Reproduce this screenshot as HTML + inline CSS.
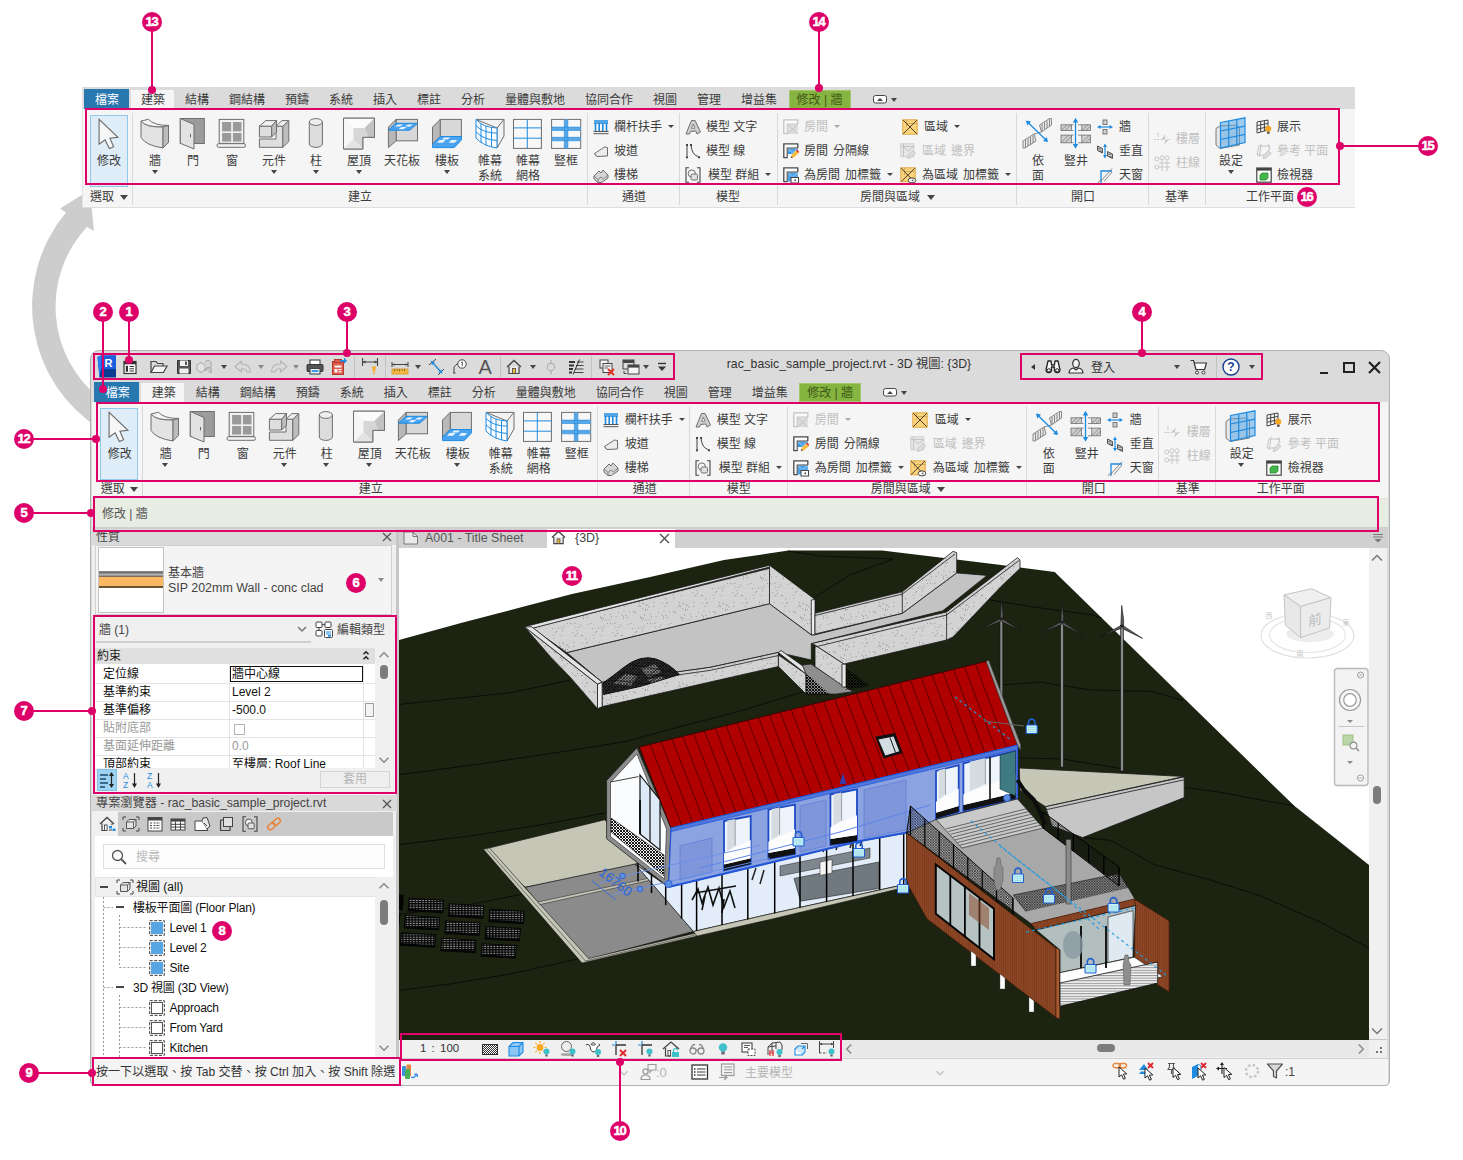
<!DOCTYPE html><html lang="zh-Hant"><head><meta charset="utf-8"><title>Revit UI</title><style>
*{box-sizing:border-box;margin:0;padding:0}
html,body{width:1463px;height:1160px;overflow:hidden;background:#fff}
body{position:relative;font-family:"Liberation Sans","Noto Sans CJK TC",sans-serif;font-size:12px;color:#3c3c3c;line-height:14px}
.a{position:absolute}
.t{position:absolute;white-space:nowrap;line-height:14px;height:14px}
.c{position:absolute;white-space:nowrap;line-height:14px;height:14px;transform:translateX(-50%);text-align:center}
.dis{color:#c0c0c0}
i{display:inline-block;width:5px}
.pb{position:absolute;border:2px solid #dc0068;pointer-events:none}
.num{position:absolute;width:20px;height:20px;border-radius:50%;background:#dc0068;color:#fff;font-weight:bold;font-size:13px;line-height:20px;text-align:center;font-family:"Liberation Sans",sans-serif;letter-spacing:-1.2px;text-indent:-1.2px;-webkit-text-stroke:.5px #fff}
.ln{position:absolute;background:#dc0068}
.dot{position:absolute;width:8px;height:8px;border-radius:50%;background:#dc0068}
.sep{position:absolute;width:1px;background:#d9d9d9}
.arr{position:absolute;width:0;height:0;border-left:3.5px solid transparent;border-right:3.5px solid transparent;border-top:4px solid #444}
svg{position:absolute;overflow:visible}
</style></head><body>
<svg style="left:0;top:0" width="1463" height="1160" viewBox="0 0 1463 1160"><path d="M60 208.5 L90 190 L94 231 L86.8 227 A117.3 117.3 0 0 0 100 398.6 L100 429 A145.5 145.5 0 0 1 66 212.6 Z" fill="#cdcdcd"/></svg>
<div class="a" style="left:82px;top:87px;width:1273px;height:121px;background:#e4e4e4"></div>
<div class="a" style="left:83px;top:87px;width:1272px;height:22px;background:#dbdbdb"></div>
<div class="a" style="left:83px;top:109px;width:1272px;height:98px;background:#f5f5f5"></div>
<div class="a" style="left:84px;top:89px;width:45px;height:20px;background:#2878b0"></div>
<div class="c " style="left:107px;top:93px;color:#fff">檔案</div>
<div class="a" style="left:131px;top:90px;width:43px;height:19px;background:#f5f5f5"></div>
<div class="c " style="left:153px;top:93px;">建築</div>
<div class="c " style="left:197px;top:93px;">結構</div>
<div class="c " style="left:247px;top:93px;">鋼結構</div>
<div class="c " style="left:297px;top:93px;">預鑄</div>
<div class="c " style="left:341px;top:93px;">系統</div>
<div class="c " style="left:385px;top:93px;">插入</div>
<div class="c " style="left:429px;top:93px;">標註</div>
<div class="c " style="left:473px;top:93px;">分析</div>
<div class="c " style="left:535px;top:93px;">量體與敷地</div>
<div class="c " style="left:609px;top:93px;">協同合作</div>
<div class="c " style="left:665px;top:93px;">視圖</div>
<div class="c " style="left:709px;top:93px;">管理</div>
<div class="c " style="left:759px;top:93px;">增益集</div>
<div class="a" style="left:788.5px;top:90px;width:62px;height:19px;background:#86b441;border:1px solid #a3c76a"></div>
<div class="c " style="left:819.5px;top:93px;color:#3f5a17">修改 | 牆</div>
<svg style="left:873px;top:95px" width="16" height="9" viewBox="0 0 16 9"><rect x=".5" y=".5" width="13" height="7.5" rx="2" fill="#fff" stroke="#444" stroke-width="1"/><path d="M4 6 L7 3 L10 6 Z" fill="#444"/></svg>
<div class="arr" style="left:890.5px;top:98px;border-top-color:#444"></div>
<div class="a" style="left:90px;top:115px;width:38px;height:72px;background:#deedf7;border:1px solid #8fc9ec"></div>
<svg style="left:93px;top:117px" width="32" height="32" viewBox="0 0 32 32"><path d="M6.1 2.4 L6.1 27.2 L12.1 22.9 L16.4 31.5 L20.6 29.7 L16.9 21.2 L24.9 20.3 Z" fill="#f7f7f7" stroke="#6a6a6a" stroke-width="1.1" stroke-linejoin="miter"/></svg>
<div class="c" style="left:109px;top:154px;height:auto;line-height:15px">修改</div>
<svg style="left:139px;top:117px" width="32" height="32" viewBox="0 0 32 32"><path d="M2 4 Q7 10.5 24 9.8 L24 31 Q7 28.5 2 20.5 Z" fill="#e3e3e3" stroke="#6e6e6e" stroke-width="1"/><path d="M24 9.8 L29.5 8.4 L29.5 25.5 L24 31 Z" fill="#bcbcbc" stroke="#6e6e6e" stroke-width="1"/><path d="M2 4 L9.5 2.3 Q15 8.6 29.5 8.4 L24 9.8 Q7 10.5 2 4 Z" fill="#f4f4f4" stroke="#6e6e6e" stroke-width="1"/></svg>
<div class="c" style="left:155px;top:154px;height:auto;line-height:15px">牆</div>
<div class="arr" style="left:151.5px;top:170px;border-top-color:#444"></div>
<svg style="left:177px;top:117px" width="32" height="32" viewBox="0 0 32 32"><rect x="3.3" y="1.5" width="24" height="25" fill="#9c9c9c" stroke="#6e6e6e" stroke-width="1"/><path d="M3.3 1.5 L17 7.5 L17 32 L3.3 26.3 Z" fill="#e2e2e2" stroke="#6e6e6e" stroke-width="1"/><rect x="13" y="17" width="1" height="3.4" fill="#666"/></svg>
<div class="c" style="left:193px;top:154px;height:auto;line-height:15px">門</div>
<svg style="left:216px;top:117px" width="32" height="32" viewBox="0 0 32 32"><rect x="3.2" y="2.4" width="24.6" height="24" fill="#f2f2f2" stroke="#6e6e6e" stroke-width="1"/><rect x="6.1" y="5" width="9.1" height="9.4" fill="#9a9a9a"/><rect x="16.9" y="5" width="8.6" height="9.4" fill="#9a9a9a"/><rect x="6.1" y="16" width="9.1" height="8.6" fill="#9a9a9a"/><rect x="16.9" y="16" width="8.6" height="8.6" fill="#9a9a9a"/><rect x="1" y="26.7" width="28.5" height="3.6" rx="1.6" fill="#f2f2f2" stroke="#6e6e6e" stroke-width="1"/></svg>
<div class="c" style="left:232px;top:154px;height:auto;line-height:15px">窗</div>
<svg style="left:258px;top:117px" width="32" height="32" viewBox="0 0 32 32"><path d="M1.4 22 L18 22 L18 9.2 L24.8 9.2 L24.8 30.3 L1.4 30.3 Z" fill="#dedede" stroke="#6e6e6e" stroke-width="1"/><path d="M24.8 9.2 L30.8 3.6 L30.8 24.6 L24.8 30.3 Z" fill="#bdbdbd" stroke="#6e6e6e" stroke-width="1"/><path d="M18 9.2 L24 3.6 L30.8 3.6 L24.8 9.2 Z" fill="#f0f0f0" stroke="#6e6e6e" stroke-width="1"/><path d="M1.4 9.2 L13.7 9.2 L13.7 20 L1.4 20 Z" fill="#dedede" stroke="#6e6e6e" stroke-width="1"/><path d="M1.4 9.2 L7.7 3.6 L18.5 3.6 L13.7 9.2 Z" fill="#f0f0f0" stroke="#6e6e6e" stroke-width="1"/><path d="M13.7 9.2 L18.5 3.6 L18.5 15 L13.7 20 Z" fill="#bdbdbd" stroke="#6e6e6e" stroke-width="1"/></svg>
<div class="c" style="left:274px;top:154px;height:auto;line-height:15px">元件</div>
<div class="arr" style="left:270.5px;top:170px;border-top-color:#444"></div>
<svg style="left:300px;top:117px" width="32" height="32" viewBox="0 0 32 32"><path d="M9.3 5 L9.3 27 A6.55 3.4 0 0 0 22.4 27 L22.4 5 Z" fill="#dcdcdc" stroke="#6e6e6e" stroke-width="1"/><ellipse cx="15.85" cy="5" rx="6.55" ry="3.4" fill="#eeeeee" stroke="#6e6e6e" stroke-width="1"/></svg>
<div class="c" style="left:316px;top:154px;height:auto;line-height:15px">柱</div>
<div class="arr" style="left:312.5px;top:170px;border-top-color:#444"></div>
<svg style="left:343px;top:117px" width="32" height="32" viewBox="0 0 32 32"><path d="M0.5 1.2 L31.5 1.2 L31.5 20.3 L19.8 20.3 L19.8 32 L0.5 32 Z" fill="#f6f6f6" stroke="#6e6e6e" stroke-width="1"/><path d="M0.5 1.2 L10.5 11 L21.5 11 L31.5 1.2 Z" fill="#fbfbfb"/><path d="M31.5 1.2 L21.5 11 L25 20.3 L31.5 20.3 Z" fill="#c2c2c2"/><path d="M10.5 11 L21.5 11 L25 20.3 L19.8 20.3 L19.8 32 L10.5 22 Z" fill="#d6d6d6"/><path d="M0.5 32 L10.5 22 L19.8 32 Z" fill="#e4e4e4"/><path d="M0.5 1.2 L31.5 1.2 L31.5 20.3 L19.8 20.3 L19.8 32 L0.5 32 Z" fill="none" stroke="#6e6e6e" stroke-width="1"/></svg>
<div class="c" style="left:359px;top:154px;height:auto;line-height:15px">屋頂</div>
<div class="arr" style="left:355.5px;top:170px;border-top-color:#444"></div>
<svg style="left:386px;top:117px" width="32" height="32" viewBox="0 0 32 32"><rect x="10.1" y="2.4" width="21.4" height="21.4" fill="#d8d8d8" stroke="#6e6e6e" stroke-width="1"/><path d="M2.4 10.1 L10.1 2.4 L10.1 23.8 L2.4 30.6 Z" fill="#b8b8b8" stroke="#6e6e6e" stroke-width="1"/><path d="M2.4 13.2 L10.1 6.3 L31.5 6.3 L23.8 13.2 Z" fill="#4aa3f0" stroke="#1e8be0" stroke-width="1"/><path d="M9 9.6 L12 7.4 L17 7.4 L14 9.6 Z M19 9.6 L22 7.4 L27 7.4 L24 9.6 Z M12.5 12.2 L15.3 10 L20.3 10 L17.5 12.2 Z" fill="#e8f3fd"/></svg>
<div class="c" style="left:402px;top:154px;height:auto;line-height:15px">天花板</div>
<svg style="left:431px;top:117px" width="32" height="32" viewBox="0 0 32 32"><rect x="9.2" y="2.4" width="21.2" height="17.1" fill="#d8d8d8" stroke="#6e6e6e" stroke-width="1"/><path d="M1.5 10.1 L9.2 2.4 L9.2 19.5 L1.5 27.2 Z" fill="#b8b8b8" stroke="#6e6e6e" stroke-width="1"/><path d="M1.5 27.2 L9.2 19.5 L30.4 19.5 L30.4 22.9 L23.2 30.6 L1.5 30.6 Z" fill="#4aa3f0" stroke="#1e8be0" stroke-width="1"/><path d="M6 25.8 L8.6 23 L14.6 23 L12 25.8 Z M17.6 25.8 L20.2 23 L26.2 23 L23.6 25.8 Z M11 22.4 L13 20.4 L19 20.4 L17 22.4 Z" fill="#e8f3fd"/></svg>
<div class="c" style="left:447px;top:154px;height:auto;line-height:15px">樓板</div>
<div class="arr" style="left:443.5px;top:170px;border-top-color:#444"></div>
<svg style="left:474px;top:117px" width="32" height="32" viewBox="0 0 32 32"><path d="M2 2.4 L30 2.4 L30 19 L23 31 L23 11 Z" fill="#f2f2f2" stroke="#6e6e6e" stroke-width="1"/><path d="M2 2.4 Q9 10.5 23 11 L23 31 Q9 29 2 21 Z" fill="#fafcff" stroke="#1e8be0" stroke-width="1"/><path d="M7 7 L7 25.6 M12 9.2 L12 28.3 M17.5 10.5 L17.5 30 M2 8.6 Q9 16 23 16.2 M2 14.8 Q9 22.5 23 23.5" fill="none" stroke="#1e8be0" stroke-width="1"/><path d="M23 11 L30 2.4" stroke="#6e6e6e" stroke-width="1"/></svg>
<div class="c" style="left:490px;top:154px;height:auto;line-height:15px">帷幕<br>系統</div>
<svg style="left:512px;top:117px" width="32" height="32" viewBox="0 0 32 32"><rect x="1.5" y="2.4" width="27.9" height="29" fill="#f8f8f8" stroke="#6e6e6e" stroke-width="1"/><path d="M15.3 2.4 L15.3 31.4 M1.5 10.9 L29.4 10.9 M1.5 21.2 L29.4 21.2" stroke="#1e8be0" stroke-width="1"/></svg>
<div class="c" style="left:528px;top:154px;height:auto;line-height:15px">帷幕<br>網格</div>
<svg style="left:550px;top:117px" width="32" height="32" viewBox="0 0 32 32"><rect x="1.6" y="2.4" width="29.1" height="29" fill="#f8f8f8" stroke="#6e6e6e" stroke-width="1"/><path d="M1.6 11.8 L30.7 11.8 M1.6 22 L30.7 22" stroke="#5aa7e6" stroke-width="3.4"/><path d="M16.1 2.4 L16.1 31.4" stroke="#5aa7e6" stroke-width="3.6"/><path d="M1.6 10.1 L30.7 10.1 M1.6 13.5 L30.7 13.5 M1.6 20.3 L30.7 20.3 M1.6 23.8 L30.7 23.8 M14.3 2.4 L14.3 31.4 M17.9 2.4 L17.9 31.4" stroke="#1e8be0" stroke-width=".6"/></svg>
<div class="c" style="left:566px;top:154px;height:auto;line-height:15px">豎框</div>
<svg style="left:1022px;top:117px" width="32" height="32" viewBox="0 0 32 32"><path d="M17.5 8 L27.5 1.5 L29.5 1.5 L29.5 8 L19.5 15 Z" fill="#e8e8e8" stroke="#6e6e6e" stroke-width=".8"/><path d="M1 24 L12 17 L14 24 L3 31 L1 31 Z" fill="#e8e8e8" stroke="#6e6e6e" stroke-width=".8"/><path d="M20 7 L20 14 M22.5 5.5 L22.5 12.5 M25 4 L25 11 M27.5 2.3 L27.5 9.2 M3.5 23 L3.5 30.5 M6 21.5 L6 29 M8.5 20 L8.5 27.5 M11 18.4 L11 26" stroke="#6e6e6e" stroke-width=".8"/><path d="M19.5 15 L12 17" stroke="#6e6e6e" stroke-width=".8"/><path d="M5 4.5 L25 24" stroke="#1e8be0" stroke-width="1.3"/><path d="M4 3.5 L9 4.6 L5.2 8.4 Z M26 25 L21 23.9 L24.8 20.1 Z" fill="#1e8be0"/></svg>
<div class="c" style="left:1038px;top:154px;height:auto;line-height:15px">依<br>面</div>
<svg style="left:1060px;top:117px" width="32" height="32" viewBox="0 0 32 32"><rect x="1" y="7.8" width="10.5" height="5.7" fill="#cfcfcf" stroke="#6e6e6e" stroke-width=".8"/><rect x="1" y="18.1" width="10.5" height="7.7" fill="#cfcfcf" stroke="#6e6e6e" stroke-width=".8"/><rect x="21.8" y="7.8" width="8.700" height="5.7" fill="#cfcfcf" stroke="#6e6e6e" stroke-width=".8"/><rect x="21.8" y="18.1" width="8.700" height="7.7" fill="#cfcfcf" stroke="#6e6e6e" stroke-width=".8"/><path d="M1 13.5 L7 7.8 M5 13.5 L11 7.8 M1 25.8 L8.500 18.1 M5 25.8 L11.500 19 M21.8 13.5 L27.8 7.8 M25.8 13.5 L30.500 9 M21.8 25.8 L29.500 18.1 M25.8 25.8 L30.500 21" stroke="#6e6e6e" stroke-width=".7"/><path d="M11.5 7.8 L13.5 7.8 M11.5 13.5 L13.5 13.5 M11.5 18.1 L13.5 18.1 M11.5 25.8 L13.5 25.8 M18 7.8 L21.8 7.8 M18 13.5 L21.8 13.5 M18 18.1 L21.8 18.1 M18 25.8 L21.8 25.8" stroke="#6e6e6e" stroke-width=".8"/><path d="M15.5 3 L15.5 29.500" stroke="#1e8be0" stroke-width="1.3"/><path d="M15.5 0.8 L18.200 5.500 L12.800 5.500 Z M15.5 31.700 L18.200 27 L12.800 27 Z" fill="#1e8be0"/></svg>
<div class="c" style="left:1076px;top:154px;height:auto;line-height:15px">豎井</div>
<svg style="left:1215px;top:117px" width="32" height="32" viewBox="0 0 32 32"><path d="M1 11.5 L5 9 L20.5 8 L24.5 10.5 L24.5 28 L5 31.5 L1 28 Z" fill="#e6e6e6" stroke="#6e6e6e" stroke-width=".9"/><path d="M5.5 5.5 L30 0.8 L30 25.5 L5.5 31 Z" fill="#5aa7e6" fill-opacity=".55" stroke="#1e8be0" stroke-width="1.2"/><path d="M13.7 4 L13.7 29.2 M21.8 2.4 L21.8 27.4 M5.5 14 L30 9.1 M5.5 22.5 L30 17.3" stroke="#1e8be0" stroke-width="1.2"/></svg>
<div class="c" style="left:1231px;top:154px;height:auto;line-height:15px">設定</div>
<div class="arr" style="left:1227.5px;top:170px;border-top-color:#444"></div>
<div class="sep" style="left:587px;top:113px;height:92px"></div>
<div class="sep" style="left:679px;top:113px;height:92px"></div>
<div class="sep" style="left:777px;top:113px;height:92px"></div>
<div class="sep" style="left:1016px;top:113px;height:92px"></div>
<div class="sep" style="left:1148px;top:113px;height:92px"></div>
<div class="sep" style="left:1205px;top:113px;height:92px"></div>
<div class="sep" style="left:132px;top:113px;height:92px"></div>
<svg style="left:593px;top:118.5px" width="16" height="16" viewBox="0 0 16 16"><path d="M1 2 L15 2 M1 4 L15 4" stroke="#1e8be0" stroke-width="1.6"/><path d="M2.5 4 L2.5 12 M6.2 4 L6.2 12 M9.8 4 L9.8 12 M13.5 4 L13.5 12" stroke="#1e8be0" stroke-width="1.6"/><path d="M0.5 12.5 L15.5 12.5 M0.5 14.7 L15.5 14.7" stroke="#555" stroke-width="1"/></svg>
<div class="t" style="left:614px;top:120px">欄杆扶手<span style="display:inline-block;vertical-align:middle;margin-left:6px;margin-top:-2px;border-left:3px solid transparent;border-right:3px solid transparent;border-top:3px solid #444"></span></div>
<svg style="left:593px;top:142.5px" width="16" height="16" viewBox="0 0 16 16"><path d="M1.5 10.5 L11.5 4 L14.5 4.5 L14.5 13 L4 13.5 Z" fill="#ececec" stroke="#6e6e6e" stroke-width="1"/><path d="M4 13.5 L14.5 4.5" stroke="#6e6e6e" stroke-width="0"/><path d="M1.5 10.5 L4 13.5" stroke="#6e6e6e" stroke-width="1"/></svg>
<div class="t" style="left:614px;top:144px">坡道</div>
<svg style="left:593px;top:166.5px" width="16" height="16" viewBox="0 0 16 16"><path d="M1 9 L6 4 L8 6 L10 3 L15 8 L15 11 L8.5 15.5 L5 15.5 L1 12 Z" fill="#d5d5d5" stroke="#6e6e6e" stroke-width="1"/><path d="M1 9 L5 12.5 L8 10 L10.5 12 L15 8 M5 12.5 L5 15.5" fill="none" stroke="#6e6e6e" stroke-width=".8"/></svg>
<div class="t" style="left:614px;top:168px">樓梯</div>
<svg style="left:685px;top:118.5px" width="16" height="16" viewBox="0 0 16 16"><path d="M1 15 L6.5 1.5 L10 1.5 L15.5 13 L12 15 L10.8 12 L5.6 12.4 L4.5 15 Z" fill="#cfcfcf" stroke="#6e6e6e" stroke-width="1" stroke-linejoin="round"/><path d="M6.6 9.4 L8.3 5 L10 9.2 Z" fill="#f5f5f5" stroke="#6e6e6e" stroke-width=".8"/></svg>
<div class="t" style="left:706px;top:120px">模型 文字</div>
<svg style="left:685px;top:142.5px" width="16" height="16" viewBox="0 0 16 16"><path d="M2 3 L2 13.5" stroke="#444" stroke-width="1"/><path d="M6 2 Q7 12 13 13.5" fill="none" stroke="#444" stroke-width="1"/><rect x="1" y="1" width="2" height="2" fill="#444"/><rect x="1" y="13.3" width="2" height="2" fill="#444"/><rect x="5" y="1" width="2" height="2" fill="#444"/><rect x="13" y="13.3" width="2" height="2" fill="#444"/></svg>
<div class="t" style="left:706px;top:144px">模型 線</div>
<svg style="left:685px;top:166.5px" width="16" height="16" viewBox="0 0 16 16"><path d="M4 .8 L1 .8 L1 15.2 L4 15.2 M12 .8 L15 .8 L15 15.2 L12 15.2" fill="none" stroke="#444" stroke-width="1.1"/><circle cx="6.8" cy="6.5" r="3.6" fill="#f5f5f5" stroke="#6e6e6e" stroke-width="1"/><rect x="6" y="7" width="6.5" height="6" rx="1.4" fill="#e0e0e0" stroke="#6e6e6e" stroke-width="1"/></svg>
<div class="t" style="left:708px;top:168px">模型 群組<span style="display:inline-block;vertical-align:middle;margin-left:6px;margin-top:-2px;border-left:3px solid transparent;border-right:3px solid transparent;border-top:3px solid #444"></span></div>
<svg style="left:783px;top:118.5px" width="16" height="16" viewBox="0 0 16 16"><rect x="1.4" y="1.4" width="13" height="13" fill="#fafafa"/><rect x="4.8" y="5.5" width="10" height="9.500" fill="#dcdcdc"/><path d="M4.8 5.5 L14.8 15 M14.8 5.5 L4.8 15" stroke="#c6c6c6" stroke-width="1"/><path d="M.8 15 L.8 .8 L14.8 .8 L14.8 5" fill="none" stroke="#c4c4c4" stroke-width="1.3"/><path d="M.8 14.600 L4.200 14.600 L4.200 5 L14.8 5" fill="none" stroke="#c4c4c4" stroke-width="1.1"/></svg>
<div class="t dis" style="left:804px;top:120px">房間<span style="display:inline-block;vertical-align:middle;margin-left:6px;margin-top:-2px;border-left:3px solid transparent;border-right:3px solid transparent;border-top:3px solid #aaa"></span></div>
<svg style="left:783px;top:142.5px" width="16" height="16" viewBox="0 0 16 16"><rect x="1.4" y="1.4" width="13" height="13" fill="#fafafa"/><path d="M4.8 5.5 L14.8 5.5 L14.8 8 L9.5 11 L4.800 11 Z" fill="#4da3e8"/><path d="M4.8 5.5 L9.500 10 L14.8 5.5" fill="none" stroke="#9ccdf3" stroke-width=".9"/><path d="M5.200 9.800 L8 9.800" stroke="#1e8be0" stroke-width="1.2"/><path d="M.8 15 L.8 .8 L14.8 .8 L14.8 5" fill="none" stroke="#4a4a4a" stroke-width="1.3"/><path d="M.8 14.600 L4.200 14.600 L4.200 5 L14.8 5" fill="none" stroke="#4a4a4a" stroke-width="1.1"/><path d="M7.800 15 L8.800 11.800 L13 7.600 L15.600 10.200 L11.300 14.300 Z" fill="#f7bd3e"/><path d="M13 7.600 L14.200 6.400 L16 8.400 L15.600 10.200 Z" fill="#ee2f2f"/><path d="M7.800 15 L8.400 13.100 L9.800 14.400 Z" fill="#444"/></svg>
<div class="t" style="left:804px;top:144px">房間<i></i>分隔線</div>
<svg style="left:783px;top:166.5px" width="16" height="16" viewBox="0 0 16 16"><rect x="1.4" y="1.4" width="13" height="13" fill="#fafafa"/><rect x="4.8" y="5.5" width="10" height="9" fill="#4da3e8"/><path d="M4.8 5.5 L9.500 10 L14.8 5.5" fill="none" stroke="#9ccdf3" stroke-width=".9"/><path d="M.8 15 L.8 .8 L14.8 .8 L14.8 5" fill="none" stroke="#4a4a4a" stroke-width="1.3"/><path d="M.8 14.600 L4.200 14.600 L4.200 5 L14.8 5" fill="none" stroke="#4a4a4a" stroke-width="1.1"/><rect x="8" y="10.500" width="7.500" height="5.500" fill="#fff" stroke="#444" stroke-width="1"/><path d="M12.800 12 L10.800 13.300 L12.800 14.600 Z" fill="#444"/></svg>
<div class="t" style="left:804px;top:168px">為房間<i></i>加標籤<span style="display:inline-block;vertical-align:middle;margin-left:6px;margin-top:-2px;border-left:3px solid transparent;border-right:3px solid transparent;border-top:3px solid #444"></span></div>
<svg style="left:902px;top:118.5px" width="16" height="16" viewBox="0 0 16 16"><rect x=".8" y=".8" width="14.4" height="14.4" fill="#fbd37c" stroke="#e0aa45" stroke-width="1"/><path d="M4.500 .8 L4.500 8 M4.500 4.500 L15.200 4.500" stroke="#c9a050" stroke-width=".8"/><path d="M1.200 1.200 L14.800 14.800 M14.800 1.200 L1.200 14.800" stroke="#4a4030" stroke-width="1"/></svg>
<div class="t" style="left:924px;top:120px">區域<span style="display:inline-block;vertical-align:middle;margin-left:6px;margin-top:-2px;border-left:3px solid transparent;border-right:3px solid transparent;border-top:3px solid #444"></span></div>
<svg style="left:900px;top:142.5px" width="16" height="16" viewBox="0 0 16 16"><rect x=".8" y=".8" width="13" height="13" fill="#e6e6e6" stroke="#cfcfcf" stroke-width="1"/><path d="M3.5 .8 L3.5 13.8 M.8 3.5 L13.8 3.5 M3.5 3.5 L8 8 M13.8 3.5 L8 8" stroke="#c4c4c4" stroke-width="1"/><path d="M7.5 15.5 L8.5 12 L13 7.5 L15.5 10 L11 14.5 Z" fill="#dcdcdc" stroke="#c0c0c0" stroke-width=".8"/></svg>
<div class="t dis" style="left:922px;top:144px">區域<i></i>邊界</div>
<svg style="left:900px;top:166.5px" width="16" height="16" viewBox="0 0 16 16"><rect x=".8" y=".8" width="14.4" height="14" fill="#fbd37c" stroke="#e0aa45" stroke-width="1"/><path d="M4.500 .8 L4.500 8 M4.500 4.500 L15.200 4.500" stroke="#c9a050" stroke-width=".8"/><path d="M1.200 1.200 L12 12.500 M14.800 1.200 L1.200 14.600" stroke="#4a4030" stroke-width="1"/><ellipse cx="12" cy="13.400" rx="3.800" ry="2.500" fill="#fff" stroke="#444" stroke-width="1"/><path d="M13.300 12.200 L11.300 13.400 L13.300 14.600 Z" fill="#444"/></svg>
<div class="t" style="left:922px;top:168px">為區域<i></i>加標籤<span style="display:inline-block;vertical-align:middle;margin-left:6px;margin-top:-2px;border-left:3px solid transparent;border-right:3px solid transparent;border-top:3px solid #444"></span></div>
<svg style="left:1097px;top:118.5px" width="16" height="16" viewBox="0 0 16 16"><rect x="6" y="1" width="4" height="4.5" fill="#d0d0d0" stroke="#6e6e6e" stroke-width=".9"/><rect x="6" y="10.5" width="4" height="4.5" fill="#d0d0d0" stroke="#6e6e6e" stroke-width=".9"/><path d="M2 8 L14 8" stroke="#1e8be0" stroke-width="1.2"/><path d="M0 8 L3.5 6 L3.5 10 Z M16 8 L12.5 6 L12.5 10 Z" fill="#1e8be0"/></svg>
<div class="t" style="left:1119px;top:120px">牆</div>
<svg style="left:1097px;top:142.5px" width="16" height="16" viewBox="0 0 16 16"><path d="M.5 3 L5.5 5.5 L5.5 10 L.5 7.5 Z M10.5 8.5 L15.5 11 L15.5 15.5 L10.5 13 Z" fill="#d0d0d0" stroke="#444" stroke-width=".9"/><path d="M1 5.5 L4.5 6.2 M2 7.8 L5 8.5 M11 11 L14.5 11.7 M12 13.3 L15 14" stroke="#444" stroke-width=".7"/><path d="M8 2.5 L8 13.5" stroke="#1e8be0" stroke-width="1.2"/><path d="M8 .5 L10 4 L6 4 Z M8 15.5 L10 12 L6 12 Z" fill="#1e8be0"/></svg>
<div class="t" style="left:1119px;top:144px">垂直</div>
<svg style="left:1097px;top:166.5px" width="16" height="16" viewBox="0 0 16 16"><path d="M4 16 L4 4 L15 4" fill="none" stroke="#1e8be0" stroke-width="1.3"/><path d="M4 14 L15 1.5 M7 14.5 L15 5 M1 16 L4 12.5" stroke="#6e6e6e" stroke-width=".8"/></svg>
<div class="t" style="left:1119px;top:168px">天窗</div>
<svg style="left:1256px;top:118.5px" width="16" height="16" viewBox="0 0 16 16"><path d="M1 3 L12 1 L12 11 L1 14 Z" fill="#f5f5f5" stroke="#444" stroke-width="1"/><path d="M4.7 2.4 L4.7 13 M8.4 1.7 L8.4 12 M1 6.6 L12 4.4 M1 10.3 L12 7.7" stroke="#444" stroke-width="1"/><circle cx="12.3" cy="9.8" r="3" fill="#f5a623"/><rect x="11" y="12.6" width="2.6" height="2.2" fill="#555"/></svg>
<div class="t" style="left:1277px;top:120px">展示</div>
<svg style="left:1256px;top:142.5px" width="16" height="16" viewBox="0 0 16 16"><path d="M3 3 L14 3 L11 12 L1 12 Z" fill="none" stroke="#c4c4c4" stroke-width="1"/><path d="M5 1 L3.5 14 M12 1 L14 6" stroke="#c4c4c4" stroke-width="1"/><path d="M7 15.5 L8 12.3 L12.5 7.8 L15 10.3 L10.5 14.8 Z" fill="#dcdcdc" stroke="#c0c0c0" stroke-width=".8"/></svg>
<div class="t dis" style="left:1277px;top:144px">參考 平面</div>
<svg style="left:1256px;top:166.5px" width="16" height="16" viewBox="0 0 16 16"><rect x=".8" y="1" width="14.4" height="14.2" fill="#fff" stroke="#444" stroke-width="1.2"/><rect x=".8" y="1" width="14.4" height="2.6" fill="#444"/><path d="M4 8 L6 6 L12 6 L12 11 L10 13 L4 13 Z" fill="#43b649" stroke="#2c8c32" stroke-width=".8"/></svg>
<div class="t" style="left:1277px;top:168px">檢視器</div>
<svg style="left:1154px;top:130.5px" width="16" height="16" viewBox="0 0 16 16"><path d="M0 8.5 L6 8.5" stroke="#c8c8c8" stroke-width="1" stroke-dasharray="2 1"/><path d="M3 3 L4 2 L4 6" stroke="#c8c8c8" fill="none" stroke-width=".8"/><circle cx="11" cy="8.5" r="3" fill="#c8c8c8"/><path d="M6.5 8.5 L15.5 8.5 M11 4 L11 13" stroke="#c8c8c8" stroke-width="1"/><path d="M11 5.5 A3 3 0 0 1 14 8.5 L11 8.5 Z M11 11.5 A3 3 0 0 1 8 8.5 L11 8.5 Z" fill="#f5f5f5"/></svg>
<div class="t dis" style="left:1176px;top:132px">樓層</div>
<svg style="left:1154px;top:154.5px" width="16" height="16" viewBox="0 0 16 16"><circle cx="2.8" cy="4" r="2" fill="none" stroke="#c8c8c8" stroke-width="1"/><circle cx="2.8" cy="12" r="2" fill="none" stroke="#c8c8c8" stroke-width="1"/><circle cx="8" cy="2.8" r="2" fill="none" stroke="#c8c8c8" stroke-width="1"/><circle cx="13" cy="2.8" r="2" fill="none" stroke="#c8c8c8" stroke-width="1"/><path d="M8 5 L8 16 M13 5 L13 16 M5 8 L16 8 M5 12 L16 12" stroke="#c8c8c8" stroke-width="1"/></svg>
<div class="t dis" style="left:1176px;top:156px">柱線</div>
<div class="c " style="left:360px;top:190px;">建立</div>
<div class="c " style="left:634px;top:190px;">通道</div>
<div class="c " style="left:728px;top:190px;">模型</div>
<div class="c " style="left:1083px;top:190px;">開口</div>
<div class="c " style="left:1177px;top:190px;">基準</div>
<div class="c " style="left:1270px;top:190px;">工作平面</div>
<div class="t" style="left:90px;top:190px;">選取</div>
<div class="arr" style="left:119.5px;top:195px;border-top-color:#444;border-left-width:4.5px;border-right-width:4.5px;border-top-width:5px"></div>
<div class="c " style="left:890px;top:190px;">房間與區域</div>
<div class="arr" style="left:926.5px;top:195px;border-top-color:#444;border-left-width:4.5px;border-right-width:4.5px;border-top-width:5px"></div>
<div class="a" style="left:82px;top:207px;width:1273px;height:1px;background:#dedede"></div>
<div class="a" style="left:90px;top:350px;width:1300px;height:736px;background:#dbdbdb;border:1px solid #b0b0b0;border-radius:9px 9px 5px 5px"></div>
<svg style="left:96px;top:355px" width="22" height="24" viewBox="0 0 22 24"><path d="M1.5 2 L5 .5 L20 .5 L20 22.5 L3.5 22.5 Z" fill="#0b3c91"/><path d="M5 .5 L20 .5 L20 14 L5 14 Z" fill="#1860e0"/><path d="M1.5 2 L5 .5 L5 14 L3.5 22.5 Z" fill="#2a7af5"/><text x="12.6" y="11.6" font-family="Liberation Sans,sans-serif" font-weight="bold" font-size="11" text-anchor="middle" fill="#fff">R</text></svg>
<svg style="left:122px;top:359px" width="16" height="16" viewBox="0 0 16 16"><rect x="2" y="2.5" width="12" height="12" fill="#fff" stroke="#333" stroke-width="1.2"/><rect x="2" y="2.5" width="12" height="2.8" fill="#333"/><rect x="3.8" y="6.8" width="2.2" height="6" fill="#333"/><path d="M7.5 7.5 L12 7.5 M7.5 9.8 L12 9.8 M7.5 12 L12 12" stroke="#333" stroke-width="1"/></svg>
<svg style="left:150px;top:359px" width="18" height="16" viewBox="0 0 18 16"><path d="M1 13.5 L1 2.5 L6 2.5 L7.5 4.5 L13 4.5 L13 7" fill="none" stroke="#444" stroke-width="1.2"/><path d="M1 13.5 L4.5 7 L17 7 L13.5 13.5 Z" fill="#f5f5f5" stroke="#444" stroke-width="1.2"/></svg>
<svg style="left:175.5px;top:359px" width="16" height="16" viewBox="0 0 16 16"><path d="M1.5 1.5 L14.5 1.5 L14.5 14.5 L1.5 14.5 Z" fill="#555" stroke="#333" stroke-width="1"/><rect x="4" y="1.5" width="8" height="5.5" fill="#f0f0f0"/><rect x="3.5" y="9.5" width="9" height="5" fill="#f0f0f0"/><rect x="9" y="2.5" width="2" height="3.5" fill="#555"/></svg>
<svg style="left:196px;top:359px" width="18" height="16" viewBox="0 0 18 16"><path d="M1 6 L5 3.5 L9 6 L9 11 L5 13.5 L1 11 Z" fill="#e2e2e2" stroke="#a8a8a8" stroke-width="1"/><path d="M9 3 L12 1 L15 3 L15 9 L12 11 L9 9" fill="#d4d4d4" stroke="#a8a8a8" stroke-width="1"/><path d="M9.5 12 A3 3 0 1 1 15 13 M15.5 10.5 L15 13.2 L12.6 12.6" fill="none" stroke="#a8a8a8" stroke-width="1.1"/></svg>
<svg style="left:234px;top:359px" width="18" height="16" viewBox="0 0 18 16"><path d="M1 7.500 L7.500 2 L7.500 5 Q16.500 5 16.500 13 L13 13 Q13 9.800 7.500 9.800 L7.500 13 Z" fill="none" stroke="#b4b4b4" stroke-width="1.1" stroke-linejoin="round"/></svg>
<svg style="left:270px;top:359px" width="18" height="16" viewBox="0 0 18 16"><path d="M17 7.500 L10.500 2 L10.500 5 Q1.500 5 1.500 13 L5 13 Q5 9.800 10.500 9.800 L10.500 13 Z" fill="none" stroke="#b4b4b4" stroke-width="1.1" stroke-linejoin="round"/></svg>
<svg style="left:306px;top:359px" width="18" height="16" viewBox="0 0 18 16"><rect x="4" y="1" width="10" height="5" fill="#fff" stroke="#444" stroke-width="1.1"/><rect x="1" y="5.5" width="16" height="7" rx="1" fill="#555" stroke="#333" stroke-width="1"/><rect x="4" y="9.5" width="10" height="5.5" fill="#fff" stroke="#444" stroke-width="1.1"/><rect x="5.5" y="11" width="7" height="2.2" fill="#3d9be9"/></svg>
<svg style="left:331px;top:357px" width="16" height="18" viewBox="0 0 16 18"><rect x="1.5" y="4.5" width="11" height="13" fill="#e05a4e" stroke="#b03a30" stroke-width="1"/><rect x="3.5" y="2.5" width="7" height="3" fill="#e05a4e" stroke="#b03a30" stroke-width="1"/><rect x="3.5" y="8.5" width="7" height="2" fill="#fff"/><rect x="3.5" y="12" width="3" height="3.5" fill="#fff"/><rect x="7.5" y="12" width="3" height="1.2" fill="#fff"/><rect x="7.5" y="14.2" width="3" height="1.2" fill="#fff"/><path d="M9 3 L13 3 L13 .8 L16 3.8 L13 6.8 L13 4.8 L9 4.8 Z" fill="#1e8be0"/></svg>
<svg style="left:361px;top:357px" width="18" height="18" viewBox="0 0 18 18"><path d="M1.5 1 L1.5 9 M16.5 1 L16.5 9 M1.5 5 L16.5 5" stroke="#444" stroke-width="1.1" fill="none"/><path d="M1.5 5 L4.5 3.5 L4.5 6.5 Z M16.5 5 L13.5 3.5 L13.5 6.5 Z" fill="#444"/><path d="M11 9.5 L15 9.5 L14.3 12.5 L15.5 13.5 L10.5 13.5 L11.7 12.5 Z" fill="#f5a623"/><path d="M13 13.5 L13 17.5" stroke="#f5a623" stroke-width="1.2"/></svg>
<svg style="left:391px;top:360px" width="18" height="16" viewBox="0 0 18 16"><path d="M1 2 L1 7 M17 2 L17 7 M1 4.5 L17 4.5" stroke="#444" stroke-width="1" fill="none"/><path d="M1 4.5 L3.5 3.2 L3.5 5.8 Z M17 4.5 L14.5 3.2 L14.5 5.8 Z" fill="#444"/><rect x="1" y="9" width="16" height="5" fill="#f5b942" stroke="#d8932a" stroke-width=".8"/><path d="M3.5 9 L3.5 11.5 M6 9 L6 11 M8.5 9 L8.5 11.5 M11 9 L11 11 M13.5 9 L13.5 11.5" stroke="#7a5a1a" stroke-width=".8"/></svg>
<svg style="left:427px;top:358px" width="18" height="18" viewBox="0 0 18 18"><path d="M2 7 L9 1 M11 17 L17 11" stroke="#444" stroke-width="1"/><path d="M5 4 L14.5 14.5" stroke="#1e8be0" stroke-width="1.3"/><path d="M3.8 2.8 L8 4 L5 7 Z M15.6 15.6 L11.4 14.5 L14.4 11.5 Z" fill="#1e8be0"/></svg>
<svg style="left:452px;top:358px" width="16" height="16" viewBox="0 0 16 16"><path d="M2 15 L2 9 L6 5" fill="none" stroke="#444" stroke-width="1"/><path d="M1 15 L3.5 15" stroke="#444" stroke-width="1"/><circle cx="10" cy="6" r="4.2" fill="#fff" stroke="#444" stroke-width="1"/><path d="M9 4.5 L10.3 4 L10.3 8.2" fill="none" stroke="#444" stroke-width=".9"/></svg>
<svg style="left:506px;top:359px" width="16" height="16" viewBox="0 0 16 16"><path d="M1 8 L8 1.5 L15 8" fill="none" stroke="#444" stroke-width="1.4"/><path d="M3 7.5 L3 14.5 L13 14.5 L13 7.5" fill="#e8e8e8" stroke="#444" stroke-width="1.2"/><rect x="6.5" y="9.5" width="3" height="5" fill="#f5b942" stroke="#444" stroke-width=".8"/></svg>
<svg style="left:544px;top:359px" width="14" height="16" viewBox="0 0 14 16"><path d="M7 1 L7 4" stroke="#a8a8a8" stroke-width="1"/><circle cx="7" cy="8" r="3.8" fill="none" stroke="#a8a8a8" stroke-width="1"/><path d="M3.2 8 A3.8 3.8 0 0 0 10.8 8 L7 13.5 Z" fill="#c8c8c8"/><path d="M7 12 L7 15.5" stroke="#a8a8a8" stroke-width="1"/></svg>
<svg style="left:567.5px;top:359px" width="16" height="16" viewBox="0 0 16 16"><path d="M1 3 L7 3 M1 6.5 L6 6.5 M1 10 L5 10 M1 13.5 L4 13.5" stroke="#333" stroke-width="2"/><path d="M9 3 L15.5 3 M8 6.5 L15.5 6.5 M7 10 L15.5 10 M6 13.5 L15.5 13.5" stroke="#333" stroke-width=".9"/><path d="M11.5 .5 L5 15.5" stroke="#333" stroke-width="1"/></svg>
<svg style="left:599px;top:359px" width="16" height="16" viewBox="0 0 16 16"><rect x="1" y="1" width="8" height="8" fill="#f5f5f5" stroke="#444" stroke-width="1"/><rect x="4" y="4.5" width="9" height="9" fill="#f5f5f5" stroke="#444" stroke-width="1"/><path d="M5.5 7 L11.5 7 M5.5 9 L9 9" stroke="#444" stroke-width=".8"/><path d="M9 10 L15 16 M15 10 L9 16" stroke="#e0352b" stroke-width="2"/></svg>
<svg style="left:622px;top:359px" width="18" height="16" viewBox="0 0 18 16"><rect x="1" y="1" width="11" height="3" fill="#444"/><rect x="1" y="1" width="11" height="9" fill="none" stroke="#444" stroke-width="1"/><rect x="6" y="6" width="11" height="9" fill="#f5f5f5" stroke="#444" stroke-width="1"/><rect x="6" y="6" width="11" height="2.6" fill="#444"/><path d="M2 12 L2 14.5 L4.5 14.5" fill="none" stroke="#444" stroke-width="1"/></svg>
<svg style="left:657px;top:362px" width="10" height="10" viewBox="0 0 10 10"><path d="M1 1.5 L9 1.5" stroke="#333" stroke-width="1.4"/><path d="M1 4.5 L9 4.5 L5 9 Z" fill="#333"/></svg>
<div class="t" style="left:478.5px;top:356px;font-size:20px;line-height:22px;height:22px;color:#555;font-family:'Liberation Sans',sans-serif">A</div>
<div class="arr" style="left:220.5px;top:365px;border-top-color:#444"></div>
<div class="arr" style="left:257.5px;top:365px;border-top-color:#8a8a8a"></div>
<div class="arr" style="left:292.5px;top:365px;border-top-color:#8a8a8a"></div>
<div class="arr" style="left:415.0px;top:365px;border-top-color:#444"></div>
<div class="arr" style="left:529.5px;top:365px;border-top-color:#444"></div>
<div class="arr" style="left:643.0px;top:365px;border-top-color:#444"></div>
<div class="a" style="left:354px;top:356px;width:1px;height:22px;background:#c2c2c2"></div>
<div class="a" style="left:385px;top:356px;width:1px;height:22px;background:#c2c2c2"></div>
<div class="a" style="left:500px;top:356px;width:1px;height:22px;background:#c2c2c2"></div>
<div class="a" style="left:591px;top:356px;width:1px;height:22px;background:#c2c2c2"></div>
<div class="c " style="left:849px;top:357px;color:#333;font-size:12.25px">rac_basic_sample_project.rvt - 3D 視圖: {3D}</div>
<div class="a" style="left:1031px;top:364px;width:0;height:0;border-top:3px solid transparent;border-bottom:3px solid transparent;border-right:4px solid #333"></div>
<svg style="left:1045px;top:359px" width="16" height="16" viewBox="0 0 16 16"><path d="M3 2 L6 2 L6.5 6 L9.5 6 L10 2 L13 2 L15 11 A2.8 2.8 0 0 1 9.5 11.5 L9.5 8 L6.5 8 L6.5 11.5 A2.8 2.8 0 0 1 1 11 Z" fill="#fff" stroke="#222" stroke-width="1.3" stroke-linejoin="round"/><circle cx="3.8" cy="11.3" r="1.6" fill="#fff" stroke="#222" stroke-width="1"/><circle cx="12.2" cy="11.3" r="1.6" fill="#fff" stroke="#222" stroke-width="1"/></svg>
<svg style="left:1068px;top:358px" width="16" height="16" viewBox="0 0 16 16"><ellipse cx="8" cy="5.5" rx="3.3" ry="4.2" fill="#f5f5f5" stroke="#333" stroke-width="1.2"/><path d="M1 15 Q1.5 10.5 5.5 10 L8 12 L10.5 10 Q14.5 10.5 15 15 Z" fill="#f5f5f5" stroke="#333" stroke-width="1.2" stroke-linejoin="round"/></svg>
<div class="t" style="left:1091px;top:361px;color:#333">登入</div>
<div class="arr" style="left:1173.5px;top:365px;border-top-color:#444"></div>
<svg style="left:1190px;top:359px" width="18" height="16" viewBox="0 0 18 16"><path d="M.5 1.5 L3.5 1.5 L6 10.5 L14.5 10.5 L16.5 4 L4.3 4" fill="#fff" stroke="#333" stroke-width="1.2" stroke-linejoin="round"/><circle cx="7" cy="13.5" r="1.5" fill="#fff" stroke="#333" stroke-width="1"/><circle cx="13.5" cy="13.5" r="1.5" fill="#fff" stroke="#333" stroke-width="1"/></svg>
<div class="a" style="left:1216px;top:356px;width:1px;height:22px;background:#c2c2c2"></div>
<svg style="left:1222px;top:358px" width="18" height="18" viewBox="0 0 18 18"><circle cx="9" cy="9" r="8" fill="#fff" stroke="#1b3f91" stroke-width="1.4"/><text x="9" y="13.3" font-family="Liberation Sans,sans-serif" font-weight="bold" font-size="12" text-anchor="middle" fill="#1b3f91">?</text></svg>
<div class="arr" style="left:1248.5px;top:365px;border-top-color:#444"></div>
<div class="a" style="left:1320px;top:372px;width:8px;height:2px;background:#222"></div>
<div class="a" style="left:1343px;top:362px;width:12px;height:11px;border:2px solid #222"></div>
<svg style="left:1368px;top:361px" width="13" height="13" viewBox="0 0 13 13"><path d="M1 1 L12 12 M12 1 L1 12" stroke="#222" stroke-width="2.2"/></svg>
<div class="a" style="left:93px;top:380px;width:1295px;height:22px;background:#dbdbdb"></div>
<div class="a" style="left:93px;top:402px;width:1295px;height:96px;background:#f5f5f5"></div>
<div class="a" style="left:94px;top:382px;width:45px;height:20px;background:#2878b0"></div>
<div class="c " style="left:117.7px;top:386px;color:#fff">檔案</div>
<div class="a" style="left:141px;top:383px;width:43px;height:19px;background:#f5f5f5"></div>
<div class="c " style="left:163.7px;top:386px;">建築</div>
<div class="c " style="left:207.7px;top:386px;">結構</div>
<div class="c " style="left:257.7px;top:386px;">鋼結構</div>
<div class="c " style="left:307.7px;top:386px;">預鑄</div>
<div class="c " style="left:351.7px;top:386px;">系統</div>
<div class="c " style="left:395.7px;top:386px;">插入</div>
<div class="c " style="left:439.7px;top:386px;">標註</div>
<div class="c " style="left:483.7px;top:386px;">分析</div>
<div class="c " style="left:545.7px;top:386px;">量體與敷地</div>
<div class="c " style="left:619.7px;top:386px;">協同合作</div>
<div class="c " style="left:675.7px;top:386px;">視圖</div>
<div class="c " style="left:719.7px;top:386px;">管理</div>
<div class="c " style="left:769.7px;top:386px;">增益集</div>
<div class="a" style="left:798.5px;top:383px;width:62px;height:19px;background:#86b441;border:1px solid #a3c76a"></div>
<div class="c " style="left:830.2px;top:386px;color:#3f5a17">修改 | 牆</div>
<svg style="left:883px;top:388px" width="16" height="9" viewBox="0 0 16 9"><rect x=".5" y=".5" width="13" height="7.5" rx="2" fill="#fff" stroke="#444" stroke-width="1"/><path d="M4 6 L7 3 L10 6 Z" fill="#444"/></svg>
<div class="arr" style="left:900.5px;top:391px;border-top-color:#444"></div>
<div class="a" style="left:100px;top:408px;width:38px;height:72px;background:#deedf7;border:1px solid #8fc9ec"></div>
<svg style="left:103px;top:410px" width="32" height="32" viewBox="0 0 32 32"><path d="M6.1 2.4 L6.1 27.2 L12.1 22.9 L16.4 31.5 L20.6 29.7 L16.9 21.2 L24.9 20.3 Z" fill="#f7f7f7" stroke="#6a6a6a" stroke-width="1.1" stroke-linejoin="miter"/></svg>
<div class="c" style="left:119.7px;top:447px;height:auto;line-height:15px">修改</div>
<svg style="left:149px;top:410px" width="32" height="32" viewBox="0 0 32 32"><path d="M2 4 Q7 10.5 24 9.8 L24 31 Q7 28.5 2 20.5 Z" fill="#e3e3e3" stroke="#6e6e6e" stroke-width="1"/><path d="M24 9.8 L29.5 8.4 L29.5 25.5 L24 31 Z" fill="#bcbcbc" stroke="#6e6e6e" stroke-width="1"/><path d="M2 4 L9.5 2.3 Q15 8.6 29.5 8.4 L24 9.8 Q7 10.5 2 4 Z" fill="#f4f4f4" stroke="#6e6e6e" stroke-width="1"/></svg>
<div class="c" style="left:165.7px;top:447px;height:auto;line-height:15px">牆</div>
<div class="arr" style="left:161.5px;top:463px;border-top-color:#444"></div>
<svg style="left:187px;top:410px" width="32" height="32" viewBox="0 0 32 32"><rect x="3.3" y="1.5" width="24" height="25" fill="#9c9c9c" stroke="#6e6e6e" stroke-width="1"/><path d="M3.3 1.5 L17 7.5 L17 32 L3.3 26.3 Z" fill="#e2e2e2" stroke="#6e6e6e" stroke-width="1"/><rect x="13" y="17" width="1" height="3.4" fill="#666"/></svg>
<div class="c" style="left:203.7px;top:447px;height:auto;line-height:15px">門</div>
<svg style="left:226px;top:410px" width="32" height="32" viewBox="0 0 32 32"><rect x="3.2" y="2.4" width="24.6" height="24" fill="#f2f2f2" stroke="#6e6e6e" stroke-width="1"/><rect x="6.1" y="5" width="9.1" height="9.4" fill="#9a9a9a"/><rect x="16.9" y="5" width="8.6" height="9.4" fill="#9a9a9a"/><rect x="6.1" y="16" width="9.1" height="8.6" fill="#9a9a9a"/><rect x="16.9" y="16" width="8.6" height="8.6" fill="#9a9a9a"/><rect x="1" y="26.7" width="28.5" height="3.6" rx="1.6" fill="#f2f2f2" stroke="#6e6e6e" stroke-width="1"/></svg>
<div class="c" style="left:242.7px;top:447px;height:auto;line-height:15px">窗</div>
<svg style="left:268px;top:410px" width="32" height="32" viewBox="0 0 32 32"><path d="M1.4 22 L18 22 L18 9.2 L24.8 9.2 L24.8 30.3 L1.4 30.3 Z" fill="#dedede" stroke="#6e6e6e" stroke-width="1"/><path d="M24.8 9.2 L30.8 3.6 L30.8 24.6 L24.8 30.3 Z" fill="#bdbdbd" stroke="#6e6e6e" stroke-width="1"/><path d="M18 9.2 L24 3.6 L30.8 3.6 L24.8 9.2 Z" fill="#f0f0f0" stroke="#6e6e6e" stroke-width="1"/><path d="M1.4 9.2 L13.7 9.2 L13.7 20 L1.4 20 Z" fill="#dedede" stroke="#6e6e6e" stroke-width="1"/><path d="M1.4 9.2 L7.7 3.6 L18.5 3.6 L13.7 9.2 Z" fill="#f0f0f0" stroke="#6e6e6e" stroke-width="1"/><path d="M13.7 9.2 L18.5 3.6 L18.5 15 L13.7 20 Z" fill="#bdbdbd" stroke="#6e6e6e" stroke-width="1"/></svg>
<div class="c" style="left:284.7px;top:447px;height:auto;line-height:15px">元件</div>
<div class="arr" style="left:280.5px;top:463px;border-top-color:#444"></div>
<svg style="left:310px;top:410px" width="32" height="32" viewBox="0 0 32 32"><path d="M9.3 5 L9.3 27 A6.55 3.4 0 0 0 22.4 27 L22.4 5 Z" fill="#dcdcdc" stroke="#6e6e6e" stroke-width="1"/><ellipse cx="15.85" cy="5" rx="6.55" ry="3.4" fill="#eeeeee" stroke="#6e6e6e" stroke-width="1"/></svg>
<div class="c" style="left:326.7px;top:447px;height:auto;line-height:15px">柱</div>
<div class="arr" style="left:322.5px;top:463px;border-top-color:#444"></div>
<svg style="left:353px;top:410px" width="32" height="32" viewBox="0 0 32 32"><path d="M0.5 1.2 L31.5 1.2 L31.5 20.3 L19.8 20.3 L19.8 32 L0.5 32 Z" fill="#f6f6f6" stroke="#6e6e6e" stroke-width="1"/><path d="M0.5 1.2 L10.5 11 L21.5 11 L31.5 1.2 Z" fill="#fbfbfb"/><path d="M31.5 1.2 L21.5 11 L25 20.3 L31.5 20.3 Z" fill="#c2c2c2"/><path d="M10.5 11 L21.5 11 L25 20.3 L19.8 20.3 L19.8 32 L10.5 22 Z" fill="#d6d6d6"/><path d="M0.5 32 L10.5 22 L19.8 32 Z" fill="#e4e4e4"/><path d="M0.5 1.2 L31.5 1.2 L31.5 20.3 L19.8 20.3 L19.8 32 L0.5 32 Z" fill="none" stroke="#6e6e6e" stroke-width="1"/></svg>
<div class="c" style="left:369.7px;top:447px;height:auto;line-height:15px">屋頂</div>
<div class="arr" style="left:365.5px;top:463px;border-top-color:#444"></div>
<svg style="left:396px;top:410px" width="32" height="32" viewBox="0 0 32 32"><rect x="10.1" y="2.4" width="21.4" height="21.4" fill="#d8d8d8" stroke="#6e6e6e" stroke-width="1"/><path d="M2.4 10.1 L10.1 2.4 L10.1 23.8 L2.4 30.6 Z" fill="#b8b8b8" stroke="#6e6e6e" stroke-width="1"/><path d="M2.4 13.2 L10.1 6.3 L31.5 6.3 L23.8 13.2 Z" fill="#4aa3f0" stroke="#1e8be0" stroke-width="1"/><path d="M9 9.6 L12 7.4 L17 7.4 L14 9.6 Z M19 9.6 L22 7.4 L27 7.4 L24 9.6 Z M12.5 12.2 L15.3 10 L20.3 10 L17.5 12.2 Z" fill="#e8f3fd"/></svg>
<div class="c" style="left:412.7px;top:447px;height:auto;line-height:15px">天花板</div>
<svg style="left:441px;top:410px" width="32" height="32" viewBox="0 0 32 32"><rect x="9.2" y="2.4" width="21.2" height="17.1" fill="#d8d8d8" stroke="#6e6e6e" stroke-width="1"/><path d="M1.5 10.1 L9.2 2.4 L9.2 19.5 L1.5 27.2 Z" fill="#b8b8b8" stroke="#6e6e6e" stroke-width="1"/><path d="M1.5 27.2 L9.2 19.5 L30.4 19.5 L30.4 22.9 L23.2 30.6 L1.5 30.6 Z" fill="#4aa3f0" stroke="#1e8be0" stroke-width="1"/><path d="M6 25.8 L8.6 23 L14.6 23 L12 25.8 Z M17.6 25.8 L20.2 23 L26.2 23 L23.6 25.8 Z M11 22.4 L13 20.4 L19 20.4 L17 22.4 Z" fill="#e8f3fd"/></svg>
<div class="c" style="left:457.7px;top:447px;height:auto;line-height:15px">樓板</div>
<div class="arr" style="left:453.5px;top:463px;border-top-color:#444"></div>
<svg style="left:484px;top:410px" width="32" height="32" viewBox="0 0 32 32"><path d="M2 2.4 L30 2.4 L30 19 L23 31 L23 11 Z" fill="#f2f2f2" stroke="#6e6e6e" stroke-width="1"/><path d="M2 2.4 Q9 10.5 23 11 L23 31 Q9 29 2 21 Z" fill="#fafcff" stroke="#1e8be0" stroke-width="1"/><path d="M7 7 L7 25.6 M12 9.2 L12 28.3 M17.5 10.5 L17.5 30 M2 8.6 Q9 16 23 16.2 M2 14.8 Q9 22.5 23 23.5" fill="none" stroke="#1e8be0" stroke-width="1"/><path d="M23 11 L30 2.4" stroke="#6e6e6e" stroke-width="1"/></svg>
<div class="c" style="left:500.7px;top:447px;height:auto;line-height:15px">帷幕<br>系統</div>
<svg style="left:522px;top:410px" width="32" height="32" viewBox="0 0 32 32"><rect x="1.5" y="2.4" width="27.9" height="29" fill="#f8f8f8" stroke="#6e6e6e" stroke-width="1"/><path d="M15.3 2.4 L15.3 31.4 M1.5 10.9 L29.4 10.9 M1.5 21.2 L29.4 21.2" stroke="#1e8be0" stroke-width="1"/></svg>
<div class="c" style="left:538.7px;top:447px;height:auto;line-height:15px">帷幕<br>網格</div>
<svg style="left:560px;top:410px" width="32" height="32" viewBox="0 0 32 32"><rect x="1.6" y="2.4" width="29.1" height="29" fill="#f8f8f8" stroke="#6e6e6e" stroke-width="1"/><path d="M1.6 11.8 L30.7 11.8 M1.6 22 L30.7 22" stroke="#5aa7e6" stroke-width="3.4"/><path d="M16.1 2.4 L16.1 31.4" stroke="#5aa7e6" stroke-width="3.6"/><path d="M1.6 10.1 L30.7 10.1 M1.6 13.5 L30.7 13.5 M1.6 20.3 L30.7 20.3 M1.6 23.8 L30.7 23.8 M14.3 2.4 L14.3 31.4 M17.9 2.4 L17.9 31.4" stroke="#1e8be0" stroke-width=".6"/></svg>
<div class="c" style="left:576.7px;top:447px;height:auto;line-height:15px">豎框</div>
<svg style="left:1032px;top:410px" width="32" height="32" viewBox="0 0 32 32"><path d="M17.5 8 L27.5 1.5 L29.5 1.5 L29.5 8 L19.5 15 Z" fill="#e8e8e8" stroke="#6e6e6e" stroke-width=".8"/><path d="M1 24 L12 17 L14 24 L3 31 L1 31 Z" fill="#e8e8e8" stroke="#6e6e6e" stroke-width=".8"/><path d="M20 7 L20 14 M22.5 5.5 L22.5 12.5 M25 4 L25 11 M27.5 2.3 L27.5 9.2 M3.5 23 L3.5 30.5 M6 21.5 L6 29 M8.5 20 L8.5 27.5 M11 18.4 L11 26" stroke="#6e6e6e" stroke-width=".8"/><path d="M19.5 15 L12 17" stroke="#6e6e6e" stroke-width=".8"/><path d="M5 4.5 L25 24" stroke="#1e8be0" stroke-width="1.3"/><path d="M4 3.5 L9 4.6 L5.2 8.4 Z M26 25 L21 23.9 L24.8 20.1 Z" fill="#1e8be0"/></svg>
<div class="c" style="left:1048.7px;top:447px;height:auto;line-height:15px">依<br>面</div>
<svg style="left:1070px;top:410px" width="32" height="32" viewBox="0 0 32 32"><rect x="1" y="7.8" width="10.5" height="5.7" fill="#cfcfcf" stroke="#6e6e6e" stroke-width=".8"/><rect x="1" y="18.1" width="10.5" height="7.7" fill="#cfcfcf" stroke="#6e6e6e" stroke-width=".8"/><rect x="21.8" y="7.8" width="8.700" height="5.7" fill="#cfcfcf" stroke="#6e6e6e" stroke-width=".8"/><rect x="21.8" y="18.1" width="8.700" height="7.7" fill="#cfcfcf" stroke="#6e6e6e" stroke-width=".8"/><path d="M1 13.5 L7 7.8 M5 13.5 L11 7.8 M1 25.8 L8.500 18.1 M5 25.8 L11.500 19 M21.8 13.5 L27.8 7.8 M25.8 13.5 L30.500 9 M21.8 25.8 L29.500 18.1 M25.8 25.8 L30.500 21" stroke="#6e6e6e" stroke-width=".7"/><path d="M11.5 7.8 L13.5 7.8 M11.5 13.5 L13.5 13.5 M11.5 18.1 L13.5 18.1 M11.5 25.8 L13.5 25.8 M18 7.8 L21.8 7.8 M18 13.5 L21.8 13.5 M18 18.1 L21.8 18.1 M18 25.8 L21.8 25.8" stroke="#6e6e6e" stroke-width=".8"/><path d="M15.5 3 L15.5 29.500" stroke="#1e8be0" stroke-width="1.3"/><path d="M15.5 0.8 L18.200 5.500 L12.800 5.500 Z M15.5 31.700 L18.200 27 L12.800 27 Z" fill="#1e8be0"/></svg>
<div class="c" style="left:1086.7px;top:447px;height:auto;line-height:15px">豎井</div>
<svg style="left:1225px;top:410px" width="32" height="32" viewBox="0 0 32 32"><path d="M1 11.5 L5 9 L20.5 8 L24.5 10.5 L24.5 28 L5 31.5 L1 28 Z" fill="#e6e6e6" stroke="#6e6e6e" stroke-width=".9"/><path d="M5.5 5.5 L30 0.8 L30 25.5 L5.5 31 Z" fill="#5aa7e6" fill-opacity=".55" stroke="#1e8be0" stroke-width="1.2"/><path d="M13.7 4 L13.7 29.2 M21.8 2.4 L21.8 27.4 M5.5 14 L30 9.1 M5.5 22.5 L30 17.3" stroke="#1e8be0" stroke-width="1.2"/></svg>
<div class="c" style="left:1241.7px;top:447px;height:auto;line-height:15px">設定</div>
<div class="arr" style="left:1237.5px;top:463px;border-top-color:#444"></div>
<div class="sep" style="left:597px;top:406px;height:90px"></div>
<div class="sep" style="left:689px;top:406px;height:90px"></div>
<div class="sep" style="left:787px;top:406px;height:90px"></div>
<div class="sep" style="left:1026px;top:406px;height:90px"></div>
<div class="sep" style="left:1158px;top:406px;height:90px"></div>
<div class="sep" style="left:1215px;top:406px;height:90px"></div>
<div class="sep" style="left:142px;top:406px;height:90px"></div>
<svg style="left:603px;top:411.5px" width="16" height="16" viewBox="0 0 16 16"><path d="M1 2 L15 2 M1 4 L15 4" stroke="#1e8be0" stroke-width="1.6"/><path d="M2.5 4 L2.5 12 M6.2 4 L6.2 12 M9.8 4 L9.8 12 M13.5 4 L13.5 12" stroke="#1e8be0" stroke-width="1.6"/><path d="M0.5 12.5 L15.5 12.5 M0.5 14.7 L15.5 14.7" stroke="#555" stroke-width="1"/></svg>
<div class="t" style="left:624.7px;top:413px">欄杆扶手<span style="display:inline-block;vertical-align:middle;margin-left:6px;margin-top:-2px;border-left:3px solid transparent;border-right:3px solid transparent;border-top:3px solid #444"></span></div>
<svg style="left:603px;top:435.5px" width="16" height="16" viewBox="0 0 16 16"><path d="M1.5 10.5 L11.5 4 L14.5 4.5 L14.5 13 L4 13.5 Z" fill="#ececec" stroke="#6e6e6e" stroke-width="1"/><path d="M4 13.5 L14.5 4.5" stroke="#6e6e6e" stroke-width="0"/><path d="M1.5 10.5 L4 13.5" stroke="#6e6e6e" stroke-width="1"/></svg>
<div class="t" style="left:624.7px;top:437px">坡道</div>
<svg style="left:603px;top:459.5px" width="16" height="16" viewBox="0 0 16 16"><path d="M1 9 L6 4 L8 6 L10 3 L15 8 L15 11 L8.5 15.5 L5 15.5 L1 12 Z" fill="#d5d5d5" stroke="#6e6e6e" stroke-width="1"/><path d="M1 9 L5 12.5 L8 10 L10.5 12 L15 8 M5 12.5 L5 15.5" fill="none" stroke="#6e6e6e" stroke-width=".8"/></svg>
<div class="t" style="left:624.7px;top:461px">樓梯</div>
<svg style="left:695px;top:411.5px" width="16" height="16" viewBox="0 0 16 16"><path d="M1 15 L6.5 1.5 L10 1.5 L15.5 13 L12 15 L10.8 12 L5.6 12.4 L4.5 15 Z" fill="#cfcfcf" stroke="#6e6e6e" stroke-width="1" stroke-linejoin="round"/><path d="M6.6 9.4 L8.3 5 L10 9.2 Z" fill="#f5f5f5" stroke="#6e6e6e" stroke-width=".8"/></svg>
<div class="t" style="left:716.7px;top:413px">模型 文字</div>
<svg style="left:695px;top:435.5px" width="16" height="16" viewBox="0 0 16 16"><path d="M2 3 L2 13.5" stroke="#444" stroke-width="1"/><path d="M6 2 Q7 12 13 13.5" fill="none" stroke="#444" stroke-width="1"/><rect x="1" y="1" width="2" height="2" fill="#444"/><rect x="1" y="13.3" width="2" height="2" fill="#444"/><rect x="5" y="1" width="2" height="2" fill="#444"/><rect x="13" y="13.3" width="2" height="2" fill="#444"/></svg>
<div class="t" style="left:716.7px;top:437px">模型 線</div>
<svg style="left:695px;top:459.5px" width="16" height="16" viewBox="0 0 16 16"><path d="M4 .8 L1 .8 L1 15.2 L4 15.2 M12 .8 L15 .8 L15 15.2 L12 15.2" fill="none" stroke="#444" stroke-width="1.1"/><circle cx="6.8" cy="6.5" r="3.6" fill="#f5f5f5" stroke="#6e6e6e" stroke-width="1"/><rect x="6" y="7" width="6.5" height="6" rx="1.4" fill="#e0e0e0" stroke="#6e6e6e" stroke-width="1"/></svg>
<div class="t" style="left:718.7px;top:461px">模型 群組<span style="display:inline-block;vertical-align:middle;margin-left:6px;margin-top:-2px;border-left:3px solid transparent;border-right:3px solid transparent;border-top:3px solid #444"></span></div>
<svg style="left:793px;top:411.5px" width="16" height="16" viewBox="0 0 16 16"><rect x="1.4" y="1.4" width="13" height="13" fill="#fafafa"/><rect x="4.8" y="5.5" width="10" height="9.500" fill="#dcdcdc"/><path d="M4.8 5.5 L14.8 15 M14.8 5.5 L4.8 15" stroke="#c6c6c6" stroke-width="1"/><path d="M.8 15 L.8 .8 L14.8 .8 L14.8 5" fill="none" stroke="#c4c4c4" stroke-width="1.3"/><path d="M.8 14.600 L4.200 14.600 L4.200 5 L14.8 5" fill="none" stroke="#c4c4c4" stroke-width="1.1"/></svg>
<div class="t dis" style="left:814.7px;top:413px">房間<span style="display:inline-block;vertical-align:middle;margin-left:6px;margin-top:-2px;border-left:3px solid transparent;border-right:3px solid transparent;border-top:3px solid #aaa"></span></div>
<svg style="left:793px;top:435.5px" width="16" height="16" viewBox="0 0 16 16"><rect x="1.4" y="1.4" width="13" height="13" fill="#fafafa"/><path d="M4.8 5.5 L14.8 5.5 L14.8 8 L9.5 11 L4.800 11 Z" fill="#4da3e8"/><path d="M4.8 5.5 L9.500 10 L14.8 5.5" fill="none" stroke="#9ccdf3" stroke-width=".9"/><path d="M5.200 9.800 L8 9.800" stroke="#1e8be0" stroke-width="1.2"/><path d="M.8 15 L.8 .8 L14.8 .8 L14.8 5" fill="none" stroke="#4a4a4a" stroke-width="1.3"/><path d="M.8 14.600 L4.200 14.600 L4.200 5 L14.8 5" fill="none" stroke="#4a4a4a" stroke-width="1.1"/><path d="M7.800 15 L8.800 11.800 L13 7.600 L15.600 10.200 L11.300 14.300 Z" fill="#f7bd3e"/><path d="M13 7.600 L14.200 6.400 L16 8.400 L15.600 10.200 Z" fill="#ee2f2f"/><path d="M7.800 15 L8.400 13.100 L9.800 14.400 Z" fill="#444"/></svg>
<div class="t" style="left:814.7px;top:437px">房間<i></i>分隔線</div>
<svg style="left:793px;top:459.5px" width="16" height="16" viewBox="0 0 16 16"><rect x="1.4" y="1.4" width="13" height="13" fill="#fafafa"/><rect x="4.8" y="5.5" width="10" height="9" fill="#4da3e8"/><path d="M4.8 5.5 L9.500 10 L14.8 5.5" fill="none" stroke="#9ccdf3" stroke-width=".9"/><path d="M.8 15 L.8 .8 L14.8 .8 L14.8 5" fill="none" stroke="#4a4a4a" stroke-width="1.3"/><path d="M.8 14.600 L4.200 14.600 L4.200 5 L14.8 5" fill="none" stroke="#4a4a4a" stroke-width="1.1"/><rect x="8" y="10.500" width="7.500" height="5.500" fill="#fff" stroke="#444" stroke-width="1"/><path d="M12.800 12 L10.800 13.300 L12.800 14.600 Z" fill="#444"/></svg>
<div class="t" style="left:814.7px;top:461px">為房間<i></i>加標籤<span style="display:inline-block;vertical-align:middle;margin-left:6px;margin-top:-2px;border-left:3px solid transparent;border-right:3px solid transparent;border-top:3px solid #444"></span></div>
<svg style="left:912px;top:411.5px" width="16" height="16" viewBox="0 0 16 16"><rect x=".8" y=".8" width="14.4" height="14.4" fill="#fbd37c" stroke="#e0aa45" stroke-width="1"/><path d="M4.500 .8 L4.500 8 M4.500 4.500 L15.200 4.500" stroke="#c9a050" stroke-width=".8"/><path d="M1.200 1.200 L14.800 14.800 M14.800 1.200 L1.200 14.800" stroke="#4a4030" stroke-width="1"/></svg>
<div class="t" style="left:934.7px;top:413px">區域<span style="display:inline-block;vertical-align:middle;margin-left:6px;margin-top:-2px;border-left:3px solid transparent;border-right:3px solid transparent;border-top:3px solid #444"></span></div>
<svg style="left:910px;top:435.5px" width="16" height="16" viewBox="0 0 16 16"><rect x=".8" y=".8" width="13" height="13" fill="#e6e6e6" stroke="#cfcfcf" stroke-width="1"/><path d="M3.5 .8 L3.5 13.8 M.8 3.5 L13.8 3.5 M3.5 3.5 L8 8 M13.8 3.5 L8 8" stroke="#c4c4c4" stroke-width="1"/><path d="M7.5 15.5 L8.5 12 L13 7.5 L15.5 10 L11 14.5 Z" fill="#dcdcdc" stroke="#c0c0c0" stroke-width=".8"/></svg>
<div class="t dis" style="left:932.7px;top:437px">區域<i></i>邊界</div>
<svg style="left:910px;top:459.5px" width="16" height="16" viewBox="0 0 16 16"><rect x=".8" y=".8" width="14.4" height="14" fill="#fbd37c" stroke="#e0aa45" stroke-width="1"/><path d="M4.500 .8 L4.500 8 M4.500 4.500 L15.200 4.500" stroke="#c9a050" stroke-width=".8"/><path d="M1.200 1.200 L12 12.500 M14.800 1.200 L1.200 14.600" stroke="#4a4030" stroke-width="1"/><ellipse cx="12" cy="13.400" rx="3.800" ry="2.500" fill="#fff" stroke="#444" stroke-width="1"/><path d="M13.300 12.200 L11.300 13.400 L13.300 14.600 Z" fill="#444"/></svg>
<div class="t" style="left:932.7px;top:461px">為區域<i></i>加標籤<span style="display:inline-block;vertical-align:middle;margin-left:6px;margin-top:-2px;border-left:3px solid transparent;border-right:3px solid transparent;border-top:3px solid #444"></span></div>
<svg style="left:1107px;top:411.5px" width="16" height="16" viewBox="0 0 16 16"><rect x="6" y="1" width="4" height="4.5" fill="#d0d0d0" stroke="#6e6e6e" stroke-width=".9"/><rect x="6" y="10.5" width="4" height="4.5" fill="#d0d0d0" stroke="#6e6e6e" stroke-width=".9"/><path d="M2 8 L14 8" stroke="#1e8be0" stroke-width="1.2"/><path d="M0 8 L3.5 6 L3.5 10 Z M16 8 L12.5 6 L12.5 10 Z" fill="#1e8be0"/></svg>
<div class="t" style="left:1129.7px;top:413px">牆</div>
<svg style="left:1107px;top:435.5px" width="16" height="16" viewBox="0 0 16 16"><path d="M.5 3 L5.5 5.5 L5.5 10 L.5 7.5 Z M10.5 8.5 L15.5 11 L15.5 15.5 L10.5 13 Z" fill="#d0d0d0" stroke="#444" stroke-width=".9"/><path d="M1 5.5 L4.5 6.2 M2 7.8 L5 8.5 M11 11 L14.5 11.7 M12 13.3 L15 14" stroke="#444" stroke-width=".7"/><path d="M8 2.5 L8 13.5" stroke="#1e8be0" stroke-width="1.2"/><path d="M8 .5 L10 4 L6 4 Z M8 15.5 L10 12 L6 12 Z" fill="#1e8be0"/></svg>
<div class="t" style="left:1129.7px;top:437px">垂直</div>
<svg style="left:1107px;top:459.5px" width="16" height="16" viewBox="0 0 16 16"><path d="M4 16 L4 4 L15 4" fill="none" stroke="#1e8be0" stroke-width="1.3"/><path d="M4 14 L15 1.5 M7 14.5 L15 5 M1 16 L4 12.5" stroke="#6e6e6e" stroke-width=".8"/></svg>
<div class="t" style="left:1129.7px;top:461px">天窗</div>
<svg style="left:1266px;top:411.5px" width="16" height="16" viewBox="0 0 16 16"><path d="M1 3 L12 1 L12 11 L1 14 Z" fill="#f5f5f5" stroke="#444" stroke-width="1"/><path d="M4.7 2.4 L4.7 13 M8.4 1.7 L8.4 12 M1 6.6 L12 4.4 M1 10.3 L12 7.7" stroke="#444" stroke-width="1"/><circle cx="12.3" cy="9.8" r="3" fill="#f5a623"/><rect x="11" y="12.6" width="2.6" height="2.2" fill="#555"/></svg>
<div class="t" style="left:1287.7px;top:413px">展示</div>
<svg style="left:1266px;top:435.5px" width="16" height="16" viewBox="0 0 16 16"><path d="M3 3 L14 3 L11 12 L1 12 Z" fill="none" stroke="#c4c4c4" stroke-width="1"/><path d="M5 1 L3.5 14 M12 1 L14 6" stroke="#c4c4c4" stroke-width="1"/><path d="M7 15.5 L8 12.3 L12.5 7.8 L15 10.3 L10.5 14.8 Z" fill="#dcdcdc" stroke="#c0c0c0" stroke-width=".8"/></svg>
<div class="t dis" style="left:1287.7px;top:437px">參考 平面</div>
<svg style="left:1266px;top:459.5px" width="16" height="16" viewBox="0 0 16 16"><rect x=".8" y="1" width="14.4" height="14.2" fill="#fff" stroke="#444" stroke-width="1.2"/><rect x=".8" y="1" width="14.4" height="2.6" fill="#444"/><path d="M4 8 L6 6 L12 6 L12 11 L10 13 L4 13 Z" fill="#43b649" stroke="#2c8c32" stroke-width=".8"/></svg>
<div class="t" style="left:1287.7px;top:461px">檢視器</div>
<svg style="left:1164px;top:423.5px" width="16" height="16" viewBox="0 0 16 16"><path d="M0 8.5 L6 8.5" stroke="#c8c8c8" stroke-width="1" stroke-dasharray="2 1"/><path d="M3 3 L4 2 L4 6" stroke="#c8c8c8" fill="none" stroke-width=".8"/><circle cx="11" cy="8.5" r="3" fill="#c8c8c8"/><path d="M6.5 8.5 L15.5 8.5 M11 4 L11 13" stroke="#c8c8c8" stroke-width="1"/><path d="M11 5.5 A3 3 0 0 1 14 8.5 L11 8.5 Z M11 11.5 A3 3 0 0 1 8 8.5 L11 8.5 Z" fill="#f5f5f5"/></svg>
<div class="t dis" style="left:1186.7px;top:425px">樓層</div>
<svg style="left:1164px;top:447.5px" width="16" height="16" viewBox="0 0 16 16"><circle cx="2.8" cy="4" r="2" fill="none" stroke="#c8c8c8" stroke-width="1"/><circle cx="2.8" cy="12" r="2" fill="none" stroke="#c8c8c8" stroke-width="1"/><circle cx="8" cy="2.8" r="2" fill="none" stroke="#c8c8c8" stroke-width="1"/><circle cx="13" cy="2.8" r="2" fill="none" stroke="#c8c8c8" stroke-width="1"/><path d="M8 5 L8 16 M13 5 L13 16 M5 8 L16 8 M5 12 L16 12" stroke="#c8c8c8" stroke-width="1"/></svg>
<div class="t dis" style="left:1186.7px;top:449px">柱線</div>
<div class="c " style="left:370.7px;top:482px;">建立</div>
<div class="c " style="left:644.7px;top:482px;">通道</div>
<div class="c " style="left:738.7px;top:482px;">模型</div>
<div class="c " style="left:1093.7px;top:482px;">開口</div>
<div class="c " style="left:1187.7px;top:482px;">基準</div>
<div class="c " style="left:1280.7px;top:482px;">工作平面</div>
<div class="t" style="left:100.7px;top:482px;">選取</div>
<div class="arr" style="left:129.5px;top:487px;border-top-color:#444;border-left-width:4.5px;border-right-width:4.5px;border-top-width:5px"></div>
<div class="c " style="left:900.7px;top:482px;">房間與區域</div>
<div class="arr" style="left:936.5px;top:487px;border-top-color:#444;border-left-width:4.5px;border-right-width:4.5px;border-top-width:5px"></div>
<div class="a" style="left:92px;top:380px;width:2px;height:22px;background:#dbdbdb"></div>
<div class="a" style="left:92px;top:402px;width:1px;height:97px;background:#f5f5f5"></div>
<div class="a" style="left:92px;top:498px;width:1296px;height:1px;background:#e2e2e2"></div>
<div class="a" style="left:92px;top:499px;width:1296px;height:28px;background:#e8ede3"></div>
<div class="t" style="left:102px;top:506.5px;color:#555">修改 | 牆</div>
<div class="a" style="left:92px;top:526.5px;width:1296px;height:21.5px;background:#d0d0d0"></div>
<div class="a" style="left:92px;top:529px;width:305px;height:530px;background:#f0f0f0"></div>
<div class="a" style="left:92px;top:529px;width:305px;height:16px;background:#d9d9d9"></div>
<div class="t" style="left:96px;top:530px;color:#444">性質</div>
<svg style="left:382px;top:531.5px" width="10" height="10" viewBox="0 0 10 10"><path d="M1 1 L9 9 M9 1 L1 9" stroke="#555" stroke-width="1.3"/></svg>
<div class="a" style="left:396px;top:529px;width:3px;height:530px;background:#c6c6c6"></div>
<div class="a" style="left:95px;top:545px;width:297px;height:70px;background:#f4f4f4;border:1px solid #cfcfcf"></div>
<div class="a" style="left:98px;top:547px;width:66px;height:66px;background:#fff;border:1px solid #c4c4c4"></div>
<div class="a" style="left:99px;top:571px;width:64px;height:6px;background:linear-gradient(#8a8a8a,#6e6e6e 30%,#b9b9b9 60%,#6a5a48)"></div>
<div class="a" style="left:99px;top:577px;width:64px;height:9px;background:#fbb863"></div>
<div class="a" style="left:99px;top:586px;width:64px;height:2px;background:#6b5233"></div>
<div class="t" style="left:168px;top:566px;color:#444">基本牆</div>
<div class="t" style="left:168px;top:581px;color:#444;font-size:12.45px">SIP 202mm Wall - conc clad</div>
<div class="arr" style="left:377.5px;top:578px;border-top-color:#8a8a8a"></div>
<div class="t" style="left:99px;top:623px;color:#444">牆 (1)</div>
<svg style="left:302px;top:629px" width="1" height="1" viewBox="0 0 1 1"><path d="M-4.0 -2.0 L0 2.0 L4.0 -2.0" fill="none" stroke="#777" stroke-width="1.5"/></svg>
<div class="a" style="left:96px;top:641px;width:215px;height:2px;background:#cfcfcf"></div>
<svg style="left:315px;top:621px" width="18" height="17" viewBox="0 0 18 17"><rect x="1" y="1" width="6" height="5.5" rx="1" fill="#fff" stroke="#444" stroke-width="1"/><rect x="1" y="9.5" width="6" height="5.5" rx="1" fill="#fff" stroke="#444" stroke-width="1"/><rect x="10" y="1" width="6" height="5.5" rx="1" fill="#fff" stroke="#444" stroke-width="1"/><rect x="9.5" y="8.5" width="8" height="8" rx="1" fill="#fff" stroke="#444" stroke-width="1"/><path d="M7 3.7 L10 3.7 M4 6.5 L4 9.5" stroke="#444" stroke-width="1"/><path d="M11 11 L16 11 M11 13 L16 13" stroke="#1e8be0" stroke-width="1"/><rect x="13" y="14" width="3" height="1.6" fill="#1e8be0"/></svg>
<div class="t" style="left:337px;top:623px;color:#444">編輯類型</div>
<div class="a" style="left:95px;top:648px;width:281px;height:16px;background:#e0e0e0"></div>
<div class="t" style="left:97px;top:649px;color:#222">約束</div>
<svg style="left:366px;top:653px" width="1" height="1" viewBox="0 0 1 1"><path d="M-2.5 1.25 L0 -1.25 L2.5 1.25" fill="none" stroke="#222" stroke-width="1.5"/></svg>
<svg style="left:366px;top:657.5px" width="1" height="1" viewBox="0 0 1 1"><path d="M-2.5 1.25 L0 -1.25 L2.5 1.25" fill="none" stroke="#222" stroke-width="1.5"/></svg>
<div class="a" style="left:95px;top:664px;width:281px;height:104px;background:#fff"></div>
<div class="t" style="left:103px;top:667px;color:#111">定位線</div>
<div class="t" style="left:232px;top:667px;color:#111">牆中心線</div>
<div class="a" style="left:95px;top:683px;width:281px;height:1px;background:#e4e4e4"></div>
<div class="t" style="left:103px;top:685px;color:#111">基準約束</div>
<div class="t" style="left:232px;top:685px;color:#111">Level 2</div>
<div class="a" style="left:95px;top:701px;width:281px;height:1px;background:#e4e4e4"></div>
<div class="t" style="left:103px;top:703px;color:#111">基準偏移</div>
<div class="t" style="left:232px;top:703px;color:#111">-500.0</div>
<div class="a" style="left:95px;top:719px;width:281px;height:1px;background:#e4e4e4"></div>
<div class="t" style="left:103px;top:721px;color:#9a9a9a">貼附底部</div>
<div class="a" style="left:95px;top:737px;width:281px;height:1px;background:#e4e4e4"></div>
<div class="t" style="left:103px;top:739px;color:#9a9a9a">基面延伸距離</div>
<div class="t" style="left:232px;top:739px;color:#9a9a9a">0.0</div>
<div class="a" style="left:95px;top:755px;width:281px;height:1px;background:#e4e4e4"></div>
<div class="t" style="left:103px;top:757px;color:#111">頂部約束</div>
<div class="t" style="left:232px;top:757px;color:#111">至樓層: Roof Line</div>
<div class="a" style="left:229px;top:664px;width:1px;height:104px;background:#e4e4e4"></div>
<div class="a" style="left:363px;top:664px;width:1px;height:104px;background:#e4e4e4"></div>
<div class="a" style="left:230px;top:666px;width:133px;height:16px;border:1px solid #111"></div>
<div class="a" style="left:365px;top:703px;width:9px;height:14px;border:1px solid #9a9a9a;background:#f4f4f4"></div>
<div class="a" style="left:234px;top:724px;width:11px;height:11px;border:1px solid #b4b4b4;background:#fff"></div>
<div class="a" style="left:375px;top:648px;width:18px;height:120px;background:#f0f0f0"></div>
<svg style="left:384px;top:655px" width="1" height="1" viewBox="0 0 1 1"><path d="M-4.5 2.25 L0 -2.25 L4.5 2.25" fill="none" stroke="#8a8a8a" stroke-width="1.5"/></svg>
<div class="a" style="left:380px;top:665px;width:8px;height:14px;background:#7c7c7c;border-radius:4px"></div>
<svg style="left:384px;top:760px" width="1" height="1" viewBox="0 0 1 1"><path d="M-4.5 -2.25 L0 2.25 L4.5 -2.25" fill="none" stroke="#8a8a8a" stroke-width="1.5"/></svg>
<div class="a" style="left:95px;top:768px;width:298px;height:24px;background:#f0f0f0"></div>
<div class="a" style="left:97px;top:769px;width:20px;height:22px;background:#9fd2f1;border:1px solid #7fc1ea"></div>
<svg style="left:99px;top:772px" width="16" height="16" viewBox="0 0 16 16"><path d="M1 3 L9 3 M1 7 L7 7 M1 11 L9 11 M1 15 L6 15" stroke="#1a4a6e" stroke-width="1.3"/><path d="M12.5 2 L12.5 14" stroke="#222" stroke-width="1.2"/><path d="M12.5 0 L15 4 L10 4 Z M12.5 16 L15 12 L10 12 Z" fill="#222"/></svg>
<svg style="left:123px;top:772px" width="16" height="16" viewBox="0 0 16 16"><text x="0" y="7" font-family="Liberation Sans,sans-serif" font-size="8.5" fill="#1e8be0">A</text><text x="0" y="15.5" font-family="Liberation Sans,sans-serif" font-size="8.5" fill="#1e8be0">Z</text><path d="M11.5 1 L11.5 13" stroke="#222" stroke-width="1.2"/><path d="M11.5 16 L14 11.5 L9 11.5 Z" fill="#222"/></svg>
<svg style="left:147px;top:772px" width="16" height="16" viewBox="0 0 16 16"><text x="0" y="7" font-family="Liberation Sans,sans-serif" font-size="8.5" fill="#1e8be0">Z</text><text x="0" y="15.5" font-family="Liberation Sans,sans-serif" font-size="8.5" fill="#1e8be0">A</text><path d="M11.5 1 L11.5 13" stroke="#222" stroke-width="1.2"/><path d="M11.5 16 L14 11.5 L9 11.5 Z" fill="#222"/></svg>
<div class="a" style="left:320px;top:771px;width:70px;height:17px;border:1px solid #d4d4d4;background:#efefef"></div>
<div class="c " style="left:355px;top:772px;color:#b4b4b4">套用</div>
<div class="a" style="left:92px;top:795px;width:305px;height:16px;background:#d9d9d9"></div>
<div class="t" style="left:96px;top:796px;color:#444;font-size:12.2px">專案瀏覽器 - rac_basic_sample_project.rvt</div>
<svg style="left:382px;top:798.5px" width="10" height="10" viewBox="0 0 10 10"><path d="M1 1 L9 9 M9 1 L1 9" stroke="#555" stroke-width="1.3"/></svg>
<div class="a" style="left:95px;top:812px;width:298px;height:24px;background:#c9c9c9"></div>
<div class="a" style="left:95px;top:812px;width:23px;height:24px;background:#f0f0f0"></div>
<svg style="left:99px;top:816px" width="18" height="16" viewBox="0 0 18 16"><path d="M1 8 L8 1.5 L15 8" fill="none" stroke="#444" stroke-width="1.3"/><path d="M3 7.5 L3 14.5 L8 14.5 M13 7.5 L13 9" fill="none" stroke="#444" stroke-width="1.2"/><rect x="5.5" y="9" width="2.6" height="5.5" fill="#fff" stroke="#444" stroke-width=".9"/><rect x="10" y="10" width="3" height="2.4" fill="#1e8be0"/><rect x="13.5" y="12.6" width="3" height="2.4" fill="#1e8be0"/><path d="M10 14 L13 14" stroke="#444" stroke-width="1"/></svg>
<svg style="left:122px;top:816px" width="18" height="16" viewBox="0 0 18 16"><path d="M4 1 L1 1 L1 4 M14 1 L17 1 L17 4 M4 15 L1 15 L1 12 M14 15 L17 15 L17 12" fill="none" stroke="#444" stroke-width="1"/><path d="M4.5 6 L7 3.5 L14 3.5 L14 10 L11.5 12.5 L4.5 12.5 Z" fill="#e4e4e4" stroke="#555" stroke-width="1"/><path d="M4.5 6 L11.5 6 L14 3.5 M11.5 6 L11.5 12.5" fill="none" stroke="#555" stroke-width=".9"/></svg>
<svg style="left:147px;top:816px" width="16" height="16" viewBox="0 0 16 16"><rect x="1" y="1.5" width="14" height="13.5" fill="#fff" stroke="#444" stroke-width="1"/><rect x="1" y="1.5" width="14" height="3" fill="#444"/><path d="M3 7 L5 7 M3 9.5 L5 9.5 M3 12 L5 12" stroke="#444" stroke-width="1.2"/><path d="M6.5 7 L13 7 M6.5 9.5 L13 9.5 M6.5 12 L13 12" stroke="#444" stroke-width="1" stroke-dasharray="2 1"/></svg>
<svg style="left:170px;top:816px" width="16" height="16" viewBox="0 0 16 16"><rect x="1" y="3" width="14" height="11" fill="#fff" stroke="#444" stroke-width="1"/><rect x="1" y="3" width="14" height="2.6" fill="#444"/><path d="M1 8.3 L15 8.3 M1 11.1 L15 11.1 M5.5 5.5 L5.5 14 M10.5 5.5 L10.5 14" stroke="#444" stroke-width="1"/></svg>
<svg style="left:194px;top:816px" width="18" height="16" viewBox="0 0 18 16"><path d="M1 14.5 L1 5 L8 5 L14 14.5 Z" fill="#fff" stroke="#444" stroke-width="1"/><path d="M8 5 L9 2 L13 1.5 L16 10 L13 13" fill="#e8e8e8" stroke="#444" stroke-width="1"/><path d="M10 7 L13 10" stroke="#444" stroke-width="1"/></svg>
<svg style="left:219px;top:816px" width="16" height="16" viewBox="0 0 16 16"><rect x="4.5" y="1.5" width="9" height="9" fill="#e0e0e0" stroke="#444" stroke-width="1"/><path d="M1.5 4 L1.5 14.5 L11 14.5 L11 10.5" fill="none" stroke="#444" stroke-width="1.2"/><path d="M1.5 4 L4.5 4" stroke="#444" stroke-width="1.2"/></svg>
<svg style="left:242px;top:816px" width="16" height="16" viewBox="0 0 16 16"><path d="M4 .8 L1 .8 L1 15.2 L4 15.2 M12 .8 L15 .8 L15 15.2 L12 15.2" fill="none" stroke="#444" stroke-width="1.1"/><circle cx="6.8" cy="6.5" r="3.4" fill="#f5f5f5" stroke="#555" stroke-width="1"/><rect x="6" y="7" width="6.2" height="5.8" rx="1.2" fill="#e0e0e0" stroke="#555" stroke-width="1"/></svg>
<svg style="left:266px;top:816px" width="16" height="16" viewBox="0 0 16 16"><g transform="rotate(-40 8 8)" fill="none" stroke="#e8853a" stroke-width="1.5"><rect x="0.5" y="5.5" width="8" height="5" rx="2.5"/><rect x="7.5" y="5.5" width="8" height="5" rx="2.5"/></g></svg>
<div class="a" style="left:95px;top:836px;width:298px;height:41px;background:#fff"></div>
<div class="a" style="left:103px;top:844px;width:282px;height:25px;background:#fdfdfd;border:1px solid #dedede"></div>
<svg style="left:111px;top:849px" width="16" height="16" viewBox="0 0 16 16"><circle cx="6.5" cy="6.5" r="5" fill="none" stroke="#555" stroke-width="1.3"/><path d="M10.2 10.2 L15 15" stroke="#555" stroke-width="1.8"/></svg>
<div class="t" style="left:136px;top:850px;color:#b9b9b9">搜尋</div>
<div class="a" style="left:95px;top:877px;width:281px;height:182px;background:#fff"></div>
<div class="a" style="left:95px;top:877px;width:281px;height:20px;background:#f0f0f0;border:1px solid #e4e4e4"></div>
<div class="a" style="left:375px;top:877px;width:18px;height:182px;background:#f0f0f0"></div>
<svg style="left:384px;top:886px" width="1" height="1" viewBox="0 0 1 1"><path d="M-4.5 2.25 L0 -2.25 L4.5 2.25" fill="none" stroke="#8a8a8a" stroke-width="1.5"/></svg>
<div class="a" style="left:380px;top:900px;width:8px;height:25px;background:#7c7c7c;border-radius:4px"></div>
<svg style="left:384px;top:1048px" width="1" height="1" viewBox="0 0 1 1"><path d="M-4.5 -2.25 L0 2.25 L4.5 -2.25" fill="none" stroke="#8a8a8a" stroke-width="1.5"/></svg>
<div class="a" style="left:100px;top:886px;width:8px;height:1.5px;background:#444"></div>
<svg style="left:116px;top:879px" width="18" height="16" viewBox="0 0 18 16"><path d="M4 1 L1 1 L1 4 M14 1 L17 1 L17 4 M4 15 L1 15 L1 12 M14 15 L17 15 L17 12" fill="none" stroke="#444" stroke-width="1"/><path d="M4.5 6 L7 3.5 L14 3.5 L14 10 L11.5 12.5 L4.5 12.5 Z" fill="#e4e4e4" stroke="#555" stroke-width="1"/><path d="M4.5 6 L11.5 6 L14 3.5 M11.5 6 L11.5 12.5" fill="none" stroke="#555" stroke-width=".9"/></svg>
<div class="t" style="left:136px;top:880px;color:#111">視圖 (all)</div>
<div class="a" style="left:116px;top:906px;width:8px;height:1.5px;background:#444"></div>
<div class="t" style="left:133px;top:901px;color:#111;letter-spacing:-.2px">樓板平面圖 (Floor Plan)</div>
<div class="a" style="left:116px;top:986px;width:8px;height:1.5px;background:#444"></div>
<div class="t" style="left:133px;top:981px;color:#111;letter-spacing:-.2px">3D 視圖 (3D View)</div>
<svg style="left:149px;top:920px" width="16" height="16" viewBox="0 0 16 16"><rect x="2" y="2" width="12" height="12" fill="#57a6e4"/><rect x=".7" y=".7" width="14.6" height="14.6" fill="none" stroke="#333" stroke-width="1" stroke-dasharray="3 1.5"/></svg>
<div class="t" style="left:169.4px;top:921px;color:#111;letter-spacing:-.25px">Level 1</div>
<svg style="left:149px;top:940px" width="16" height="16" viewBox="0 0 16 16"><rect x="2" y="2" width="12" height="12" fill="#57a6e4"/><rect x=".7" y=".7" width="14.6" height="14.6" fill="none" stroke="#333" stroke-width="1" stroke-dasharray="3 1.5"/></svg>
<div class="t" style="left:169.4px;top:941px;color:#111;letter-spacing:-.25px">Level 2</div>
<svg style="left:149px;top:960px" width="16" height="16" viewBox="0 0 16 16"><rect x="2" y="2" width="12" height="12" fill="#57a6e4"/><rect x=".7" y=".7" width="14.6" height="14.6" fill="none" stroke="#333" stroke-width="1" stroke-dasharray="3 1.5"/></svg>
<div class="t" style="left:169.4px;top:961px;color:#111;letter-spacing:-.25px">Site</div>
<svg style="left:149px;top:1000px" width="16" height="16" viewBox="0 0 16 16"><rect x="2.5" y="2.5" width="11" height="11" fill="#fff" stroke="#555" stroke-width="1"/><rect x=".7" y=".7" width="14.6" height="14.6" fill="none" stroke="#333" stroke-width="1" stroke-dasharray="3 1.5"/></svg>
<div class="t" style="left:169.4px;top:1001px;color:#111;letter-spacing:-.25px">Approach</div>
<svg style="left:149px;top:1020px" width="16" height="16" viewBox="0 0 16 16"><rect x="2.5" y="2.5" width="11" height="11" fill="#fff" stroke="#555" stroke-width="1"/><rect x=".7" y=".7" width="14.6" height="14.6" fill="none" stroke="#333" stroke-width="1" stroke-dasharray="3 1.5"/></svg>
<div class="t" style="left:169.4px;top:1021px;color:#111;letter-spacing:-.25px">From Yard</div>
<svg style="left:149px;top:1040px" width="16" height="16" viewBox="0 0 16 16"><rect x="2.5" y="2.5" width="11" height="11" fill="#fff" stroke="#555" stroke-width="1"/><rect x=".7" y=".7" width="14.6" height="14.6" fill="none" stroke="#333" stroke-width="1" stroke-dasharray="3 1.5"/></svg>
<div class="t" style="left:169.4px;top:1041px;color:#111;letter-spacing:-.25px">Kitchen</div>
<svg style="left:0;top:0" width="400" height="1160" viewBox="0 0 400 1160"><g stroke="#9a9a9a" stroke-width="1" stroke-dasharray="2 2" fill="none"><path d="M103.5 897 L103.5 1059 M103.5 907.5 L113 907.5 M103.5 987.5 L113 987.5"/><path d="M119.5 915 L119.5 967.5 M119.5 927.5 L146 927.5 M119.5 947.5 L146 947.5 M119.5 967.5 L146 967.5"/><path d="M119.5 995 L119.5 1059 M119.5 1007.5 L146 1007.5 M119.5 1027.5 L146 1027.5 M119.5 1047.5 L146 1047.5"/></g></svg>
<svg style="left:403px;top:531px" width="16" height="14" viewBox="0 0 16 14"><path d="M1 1 L10 1 L14.5 5.5 L14.5 13 L1 13 Z" fill="#e9e9e9" stroke="#777" stroke-width="1"/><path d="M10 1 L10 5.5 L14.5 5.5" fill="none" stroke="#777" stroke-width="1"/></svg>
<div class="t" style="left:425px;top:531px;color:#555;font-size:12.4px">A001 - Title Sheet</div>
<div class="a" style="left:547px;top:529px;width:128px;height:19px;background:#fff"></div>
<svg style="left:551px;top:530px" width="15" height="15" viewBox="0 0 16 16"><path d="M1 8 L8 1.5 L15 8" fill="none" stroke="#444" stroke-width="1.4"/><path d="M3 7.5 L3 14.5 L13 14.5 L13 7.5" fill="#e8e8e8" stroke="#444" stroke-width="1.2"/><rect x="6.5" y="9.5" width="3" height="5" fill="#f5b942" stroke="#444" stroke-width=".8"/></svg>
<div class="t" style="left:575px;top:531px;color:#444;font-size:12.4px">{3D}</div>
<svg style="left:659px;top:532.5px" width="11" height="11" viewBox="0 0 10 10"><path d="M1 1 L9 9 M9 1 L1 9" stroke="#555" stroke-width="1.3"/></svg>
<svg style="left:1372px;top:533px" width="12" height="10" viewBox="0 0 12 10"><path d="M1 1.5 L11 1.5 M1 4 L11 4" stroke="#777" stroke-width="1"/><path d="M2.5 6 L9.5 6 L6 9.5 Z" fill="#777"/></svg>
<div class="a" style="left:399px;top:548px;width:970px;height:492px;background:#fff"></div>
<div class="a" style="left:1369px;top:548px;width:18px;height:492px;background:#f0f0f0"></div>
<svg style="left:1377px;top:558px" width="1" height="1" viewBox="0 0 1 1"><path d="M-5.0 2.5 L0 -2.5 L5.0 2.5" fill="none" stroke="#777" stroke-width="1.5"/></svg>
<svg style="left:1377px;top:1031px" width="1" height="1" viewBox="0 0 1 1"><path d="M-5.0 -2.5 L0 2.5 L5.0 -2.5" fill="none" stroke="#777" stroke-width="1.5"/></svg>
<div class="a" style="left:1373px;top:786px;width:8px;height:18px;background:#7c7c7c;border-radius:4px"></div>
<div class="a" style="left:399px;top:1040px;width:988px;height:18px;background:#f0f0f0"></div>
<div class="a" style="left:399px;top:1039px;width:988px;height:1px;background:#c8c8c8"></div>
<div class="t" style="left:420px;top:1041px;color:#333;font-size:11.5px;word-spacing:2px">1 : 100</div>
<svg style="left:480.7px;top:1040px" width="18" height="18" viewBox="0 0 18 18"><defs><pattern id="chk" width="2" height="2" patternUnits="userSpaceOnUse"><rect width="1" height="1" fill="#333"/><rect x="1" y="1" width="1" height="1" fill="#333"/></pattern></defs><rect x="1.5" y="4.5" width="15" height="10" fill="#fff"/><rect x="1.5" y="4.5" width="15" height="10" fill="url(#chk)" stroke="#333" stroke-width="1"/></svg>
<svg style="left:506.66999999999996px;top:1040px" width="18" height="18" viewBox="0 0 18 18"><path d="M2 6.5 L6 2.5 L16 2.5 L16 12 L12 16 L2 16 Z" fill="#8cc6f5" stroke="#1e8be0" stroke-width="1.1"/><path d="M2 6.5 L12 6.5 L16 2.5 M12 6.5 L12 16" fill="none" stroke="#1e8be0" stroke-width="1.1"/></svg>
<svg style="left:532.64px;top:1040px" width="18" height="18" viewBox="0 0 18 18"><circle cx="7" cy="7.5" r="3.4" fill="#f7a823"/><path d="M7 1 L7 3 M7 12 L7 14 M.5 7.5 L2.5 7.5 M11.5 7.5 L13.5 7.5 M2.4 2.9 L3.8 4.3 M10.2 10.7 L11.6 12.1 M2.4 12.1 L3.8 10.7 M10.2 4.3 L11.6 2.9" stroke="#f7a823" stroke-width="1.2"/><circle cx="13.5" cy="11.5" r="3" fill="#3fc1c9"/><rect x="12.3" y="14.5" width="2.4" height="2" fill="#667"/></svg>
<svg style="left:558.61px;top:1040px" width="18" height="18" viewBox="0 0 18 18"><circle cx="7.5" cy="6.5" r="5" fill="#eee" stroke="#666" stroke-width="1"/><ellipse cx="8" cy="14.5" rx="6.5" ry="1.6" fill="#aaa"/><circle cx="13.5" cy="11.5" r="3" fill="#3fc1c9"/><rect x="12.3" y="14.5" width="2.4" height="2" fill="#667"/></svg>
<svg style="left:584.5799999999999px;top:1040px" width="18" height="18" viewBox="0 0 18 18"><path d="M1 5 Q3 3 5 6 Q5 11 8 12 Q12 12 12 7 L15 5 L13.5 4 M6 4.5 Q8 1 10.5 4.5 Q8 6 6 4.5 Z" fill="#fff" stroke="#444" stroke-width="1"/><circle cx="13" cy="12" r="3" fill="#3fc1c9"/><rect x="11.8" y="15" width="2.4" height="2" fill="#667"/></svg>
<svg style="left:610.55px;top:1040px" width="18" height="18" viewBox="0 0 18 18"><path d="M5 1 L5 5 M1 5 L4 5" stroke="#1e8be0" stroke-width="1.2"/><path d="M5 5 L15 5 M5 5 L5 15" stroke="#333" stroke-width="1.3"/><path d="M9 10 L15 16 M15 10 L9 16" stroke="#e0262b" stroke-width="1.8"/></svg>
<svg style="left:636.52px;top:1040px" width="18" height="18" viewBox="0 0 18 18"><path d="M5 1 L5 5 M1 5 L4 5" stroke="#1e8be0" stroke-width="1.2"/><path d="M5 5 L15 5 M5 5 L5 15" stroke="#333" stroke-width="1.3"/><circle cx="12.5" cy="11.5" r="3" fill="#3fc1c9"/><rect x="11.3" y="14.5" width="2.4" height="2" fill="#667"/></svg>
<svg style="left:662.49px;top:1040px" width="18" height="18" viewBox="0 0 18 18"><path d="M1 9 L9 2 L17 9" fill="none" stroke="#444" stroke-width="1.3"/><path d="M3.5 8 L3.5 16 L9 16 M14.5 7.5 L14.5 9" fill="none" stroke="#444" stroke-width="1.2"/><rect x="6" y="10.5" width="2.6" height="5.5" fill="none" stroke="#444" stroke-width=".9"/><rect x="10" y="12" width="7" height="5" fill="#3fc1c9"/><path d="M11.5 12 L11.5 10.5 A2 2 0 0 1 15.5 10.5" fill="none" stroke="#3fc1c9" stroke-width="1.2"/></svg>
<svg style="left:688.46px;top:1040px" width="18" height="18" viewBox="0 0 18 18"><circle cx="5" cy="11" r="3" fill="none" stroke="#8a8a8a" stroke-width="1.3"/><circle cx="13" cy="11" r="3" fill="none" stroke="#8a8a8a" stroke-width="1.3"/><path d="M2.5 9 Q5 3 7 5 M15.5 9 Q13 3 11 5 M8 10.5 Q9 9.5 10 10.5" fill="none" stroke="#8a8a8a" stroke-width="1.2"/></svg>
<svg style="left:714.43px;top:1040px" width="18" height="18" viewBox="0 0 18 18"><circle cx="9" cy="7.5" r="4.2" fill="#3fc1c9"/><rect x="7.3" y="11.5" width="3.4" height="3" fill="#667"/></svg>
<svg style="left:740.4px;top:1040px" width="18" height="18" viewBox="0 0 18 18"><rect x="2" y="3" width="10" height="9" fill="#fff" stroke="#444" stroke-width="1.1"/><path d="M4 5.5 L10 5.5 M4 7.5 L8 7.5" stroke="#444" stroke-width=".9"/><rect x="8" y="9" width="7" height="6.5" fill="#fff" stroke="#444" stroke-width="1" stroke-dasharray="2 1.2"/></svg>
<svg style="left:766.3699999999999px;top:1040px" width="18" height="18" viewBox="0 0 18 18"><path d="M2 7 L6 3 L14 2 L16 5 L16 10 M2 7 L2 15 M6 3 L6 12 M10 2.5 L10 9 M2 7 L10 6" fill="none" stroke="#444" stroke-width="1"/><path d="M4 10 L4 16 M7 10 L7 16 M3 13 L8 13" stroke="#e0262b" stroke-width="1.2"/><circle cx="13.5" cy="12" r="3" fill="#3fc1c9"/><rect x="12.3" y="15" width="2.4" height="2" fill="#667"/></svg>
<svg style="left:792.3399999999999px;top:1040px" width="18" height="18" viewBox="0 0 18 18"><path d="M3 9 L10 9 L10 15 L3 15 Z" fill="#fff" stroke="#1e8be0" stroke-width="1.1"/><path d="M3 9 L6 6 L13 6 L13 12 L10 15 M10 9 L13 6" fill="#cfe6fa" stroke="#1e8be0" stroke-width="1.1"/><path d="M9 3.5 L15.5 3.5 L15.5 9" fill="none" stroke="#666" stroke-width="1"/></svg>
<svg style="left:818.31px;top:1040px" width="18" height="18" viewBox="0 0 18 18"><path d="M1.5 1 L1.5 13 M15.5 1 L15.5 8 M1.5 4 L15.5 4" fill="none" stroke="#444" stroke-width="1"/><path d="M1.5 4 L4 2.8 L4 5.2 Z M15.5 4 L13 2.8 L13 5.2 Z" fill="#444"/><path d="M1.5 13 L9 13" stroke="#444" stroke-width="1" stroke-dasharray="2 1.5"/><circle cx="13.5" cy="11.5" r="3" fill="#3fc1c9"/><rect x="12.3" y="14.5" width="2.4" height="2" fill="#667"/></svg>
<div class="a" style="left:842px;top:1040px;width:527px;height:17px;background:#e8e8e8"></div>
<svg style="left:849px;top:1048.5px" width="1" height="1" viewBox="0 0 1 1"><path d="M2.25 -4.5 L-2.25 0 L2.25 4.5" fill="none" stroke="#8a8a8a" stroke-width="1.5"/></svg>
<svg style="left:1361px;top:1048.5px" width="1" height="1" viewBox="0 0 1 1"><path d="M-2.25 -4.5 L2.25 0 L-2.25 4.5" fill="none" stroke="#8a8a8a" stroke-width="1.5"/></svg>
<div class="a" style="left:1097px;top:1044px;width:18px;height:8px;background:#7c7c7c;border-radius:4px"></div>
<svg style="left:1375px;top:1046px" width="8" height="8" viewBox="0 0 8 8"><path d="M5 1 h2 v2 h-2z M5 5 h2 v2 h-2z M1 5 h2 v2 h-2z" fill="#777"/></svg>
<div class="a" style="left:92px;top:1059px;width:1296px;height:26px;background:#f4f4f4;border-radius:0 0 4px 4px"></div>
<div class="a" style="left:92px;top:1058px;width:1296px;height:1px;background:#d0d0d0"></div>
<div class="t" style="left:96px;top:1065px;color:#333;font-size:12.05px">按一下以選取、按 Tab 交替、按 Ctrl 加入、按 Shift 除選</div>
<svg style="left:401px;top:1063px" width="18" height="18" viewBox="0 0 18 18"><rect x="1" y="3" width="4" height="10" rx="1" fill="#3d8fe0"/><rect x="5.5" y="1.5" width="4.5" height="12" rx="1" fill="#e8853a"/><rect x="4" y="6" width="5" height="10" rx="1" fill="#49b05a"/><path d="M10 14 Q13 16 16 11 M16 11 L16.5 14 M16 11 L13.3 11.5" fill="none" stroke="#3d8fe0" stroke-width="1.4"/></svg>
<svg style="left:624px;top:1073px" width="1" height="1" viewBox="0 0 1 1"><path d="M-3.5 -1.75 L0 1.75 L3.5 -1.75" fill="none" stroke="#c4c4c4" stroke-width="1.5"/></svg>
<svg style="left:640px;top:1063px" width="18" height="18" viewBox="0 0 18 18"><circle cx="5.5" cy="8.5" r="2.6" fill="none" stroke="#9a9a9a" stroke-width="1.2"/><path d="M1 16.5 Q1 12 5.5 12 Q10 12 10 16.5 Z" fill="none" stroke="#9a9a9a" stroke-width="1.2"/><path d="M8 1.5 L16 1.5 L16 7 L12 7 L10 9.5 L10 7 L8 7 Z" fill="none" stroke="#9a9a9a" stroke-width="1.1"/></svg>
<div class="t" style="left:656px;top:1066px;color:#b4b4b4;font-size:13px">:0</div>
<svg style="left:691px;top:1063px" width="18" height="18" viewBox="0 0 18 18"><rect x="1" y="2" width="15.5" height="14" fill="#fff" stroke="#333" stroke-width="1.3"/><path d="M3 6 L4.5 6 M3 9 L4.5 9 M3 12 L4.5 12" stroke="#333" stroke-width="1.4"/><path d="M6 6 L14.5 6 M6 9 L14.5 9 M6 12 L14.5 12" stroke="#333" stroke-width="1.2"/></svg>
<svg style="left:718px;top:1063px" width="18" height="18" viewBox="0 0 18 18"><rect x="3.5" y="1" width="12.5" height="11.5" fill="#f4f4f4" stroke="#9a9a9a" stroke-width="1.2"/><path d="M6 4 L14 4 M6 6.8 L14 6.8 M6 9.6 L14 9.6" stroke="#9a9a9a" stroke-width="1.1"/><path d="M1 14.5 L9 14.5 M6 12 L9 14.5 L6 17" fill="none" stroke="#9a9a9a" stroke-width="1.2"/></svg>
<div class="t" style="left:745px;top:1066px;color:#b4b4b4">主要模型</div>
<svg style="left:940px;top:1073px" width="1" height="1" viewBox="0 0 1 1"><path d="M-3.5 -1.75 L0 1.75 L3.5 -1.75" fill="none" stroke="#c4c4c4" stroke-width="1.5"/></svg>
<svg style="left:1112px;top:1062px" width="18" height="18" viewBox="0 0 18 18"><g fill="none" stroke="#e8853a" stroke-width="1.4"><rect x="1" y="1.5" width="7.5" height="4.2" rx="2.1"/><rect x="7" y="1.5" width="7.5" height="4.2" rx="2.1"/></g><path d="M7 5 l0 10 l2.6 -2.2 l2 4.4 l1.8 -.8 l-2 -4.3 l3.4 -.2 Z" fill="#fff" stroke="#222" stroke-width="1"/></svg>
<svg style="left:1138px;top:1062px" width="18" height="18" viewBox="0 0 18 18"><path d="M1 8 L6 2 L10 8 Z" fill="#1e8be0"/><path d="M1 12 L10 12 L8 9.5 L3 9.5 Z" fill="#1e8be0"/><path d="M10 1 L15 6 M15 1 L10 6" stroke="#e0262b" stroke-width="1.8"/><path d="M7 6 l0 10 l2.6 -2.2 l2 4.4 l1.8 -.8 l-2 -4.3 l3.4 -.2 Z" fill="#fff" stroke="#222" stroke-width="1"/></svg>
<svg style="left:1165px;top:1062px" width="18" height="18" viewBox="0 0 18 18"><path d="M3 1.5 L10 1.5 M4.5 1.5 L4.5 5 L3 7.5 L10 7.5 L8.5 5 L8.5 1.5 M6.5 7.5 L6.5 12" fill="none" stroke="#555" stroke-width="1.1"/><path d="M8 5.5 l0 10 l2.6 -2.2 l2 4.4 l1.8 -.8 l-2 -4.3 l3.4 -.2 Z" fill="#fff" stroke="#222" stroke-width="1"/></svg>
<svg style="left:1190px;top:1062px" width="18" height="18" viewBox="0 0 18 18"><path d="M2 5 L8 2 L8 14 L2 17 Z" fill="#1e8be0"/><path d="M8 2 L11 4 L11 8" fill="none" stroke="#1e8be0" stroke-width="1"/><path d="M11 1 L16 6 M16 1 L11 6" stroke="#e0262b" stroke-width="1.8"/><path d="M8 6 l0 10 l2.6 -2.2 l2 4.4 l1.8 -.8 l-2 -4.3 l3.4 -.2 Z" fill="#fff" stroke="#222" stroke-width="1"/></svg>
<svg style="left:1216px;top:1062px" width="18" height="18" viewBox="0 0 18 18"><path d="M6 1 L6 12 M1 6.5 L11 6.5" stroke="#222" stroke-width="1.1"/><path d="M6 0 L8 3 L4 3 Z M0 6.5 L3 4.5 L3 8.5 Z" fill="#222"/><path d="M8 5.5 l0 10 l2.6 -2.2 l2 4.4 l1.8 -.8 l-2 -4.3 l3.4 -.2 Z" fill="#fff" stroke="#222" stroke-width="1"/></svg>
<svg style="left:1243px;top:1062px" width="18" height="18" viewBox="0 0 18 18"><circle cx="9" cy="9" r="6" fill="none" stroke="#c4c4c4" stroke-width="2.4" stroke-dasharray="2.4 2.3"/></svg>
<svg style="left:1266px;top:1062px" width="18" height="18" viewBox="0 0 18 18"><path d="M1.5 2 L16.5 2 L10.5 9 L10.5 16 L7.5 14.5 L7.5 9 Z" fill="#d8d8d8" stroke="#555" stroke-width="1.2" stroke-linejoin="round"/></svg>
<div class="t" style="left:1285px;top:1065px;color:#444">:1</div>
<svg style="left:399px;top:548px;overflow:hidden" width="970" height="492" viewBox="399 548 970 492">
<defs><pattern id="spk" width="40" height="40" patternUnits="userSpaceOnUse"><rect x="13.0" y="6.0" width=".8" height=".8" fill="#777"/><rect x="26.0" y="2.9" width=".8" height=".8" fill="#777"/><rect x="21.4" y="14.6" width=".8" height=".8" fill="#777"/><rect x="2.3" y="20.3" width=".8" height=".8" fill="#777"/><rect x="1.5" y="17.3" width=".8" height=".8" fill="#777"/><rect x="2.8" y="3.6" width=".8" height=".8" fill="#777"/><rect x="17.0" y="33.1" width=".8" height=".8" fill="#777"/><rect x="5.0" y="8.9" width=".8" height=".8" fill="#777"/><rect x="25.1" y="37.9" width=".8" height=".8" fill="#777"/><rect x="23.1" y="15.9" width=".8" height=".8" fill="#777"/><rect x="39.1" y="1.9" width=".8" height=".8" fill="#777"/><rect x="34.3" y="11.6" width=".8" height=".8" fill="#777"/><rect x="5.8" y="4.7" width=".8" height=".8" fill="#777"/><rect x="12.3" y="32.6" width=".8" height=".8" fill="#777"/><rect x="7.2" y="23.3" width=".8" height=".8" fill="#777"/><rect x="25.6" y="14.9" width=".8" height=".8" fill="#777"/><rect x="21.9" y="2.5" width=".8" height=".8" fill="#777"/><rect x="2.4" y="8.2" width=".8" height=".8" fill="#777"/><rect x="27.2" y="17.1" width=".8" height=".8" fill="#777"/><rect x="12.6" y="23.4" width=".8" height=".8" fill="#777"/><rect x="18.1" y="12.0" width=".8" height=".8" fill="#777"/><rect x="31.8" y="28.0" width=".8" height=".8" fill="#777"/><rect x="9.8" y="23.0" width=".8" height=".8" fill="#777"/><rect x="21.0" y="35.0" width=".8" height=".8" fill="#777"/><rect x="29.2" y="11.5" width=".8" height=".8" fill="#777"/><rect x="39.2" y="4.7" width=".8" height=".8" fill="#777"/><rect x="16.7" y="30.3" width=".8" height=".8" fill="#777"/><rect x="6.1" y="19.6" width=".8" height=".8" fill="#777"/><rect x="1.6" y="26.7" width=".8" height=".8" fill="#777"/><rect x="30.6" y="22.9" width=".8" height=".8" fill="#777"/><rect x="35.0" y="12.5" width=".8" height=".8" fill="#777"/><rect x="27.8" y="23.8" width=".8" height=".8" fill="#777"/><rect x="23.2" y="18.2" width=".8" height=".8" fill="#777"/><rect x="33.6" y="37.8" width=".8" height=".8" fill="#777"/><rect x="19.0" y="26.6" width=".8" height=".8" fill="#777"/><rect x="2.4" y="28.1" width=".8" height=".8" fill="#777"/><rect x="25.9" y="39.7" width=".8" height=".8" fill="#777"/><rect x="32.9" y="11.4" width=".8" height=".8" fill="#777"/><rect x="15.4" y="26.7" width=".8" height=".8" fill="#777"/><rect x="0.9" y="18.5" width=".8" height=".8" fill="#777"/><rect x="6.7" y="4.7" width=".8" height=".8" fill="#777"/><rect x="2.4" y="30.7" width=".8" height=".8" fill="#777"/><rect x="5.2" y="9.9" width=".8" height=".8" fill="#777"/><rect x="15.6" y="34.9" width=".8" height=".8" fill="#777"/><rect x="3.2" y="18.0" width=".8" height=".8" fill="#777"/><rect x="22.0" y="35.3" width=".8" height=".8" fill="#777"/><rect x="32.8" y="34.6" width=".8" height=".8" fill="#777"/><rect x="11.1" y="16.6" width=".8" height=".8" fill="#777"/><rect x="14.4" y="35.4" width=".8" height=".8" fill="#777"/><rect x="38.3" y="6.0" width=".8" height=".8" fill="#777"/><rect x="7.0" y="9.3" width=".8" height=".8" fill="#777"/><rect x="9.3" y="19.4" width=".8" height=".8" fill="#777"/><rect x="23.6" y="10.5" width=".8" height=".8" fill="#777"/><rect x="0.2" y="16.8" width=".8" height=".8" fill="#777"/><rect x="14.8" y="22.7" width=".8" height=".8" fill="#777"/><rect x="38.1" y="27.6" width=".8" height=".8" fill="#777"/><rect x="20.6" y="24.7" width=".8" height=".8" fill="#777"/><rect x="27.0" y="2.2" width=".8" height=".8" fill="#777"/><rect x="36.0" y="31.2" width=".8" height=".8" fill="#777"/><rect x="35.0" y="31.9" width=".8" height=".8" fill="#777"/><rect x="15.7" y="16.0" width=".8" height=".8" fill="#777"/><rect x="4.1" y="25.4" width=".8" height=".8" fill="#777"/><rect x="2.5" y="2.7" width=".8" height=".8" fill="#777"/><rect x="8.4" y="6.5" width=".8" height=".8" fill="#777"/><rect x="13.6" y="2.1" width=".8" height=".8" fill="#777"/><rect x="0.0" y="6.1" width=".8" height=".8" fill="#777"/><rect x="4.1" y="14.5" width=".8" height=".8" fill="#777"/><rect x="1.0" y="35.0" width=".8" height=".8" fill="#777"/><rect x="24.6" y="5.9" width=".8" height=".8" fill="#777"/><rect x="10.1" y="13.9" width=".8" height=".8" fill="#777"/></pattern><pattern id="hat" width="3" height="3" patternUnits="userSpaceOnUse"><path d="M0 0 L3 3 M3 0 L0 3" stroke="#000" stroke-width=".9"/></pattern><pattern id="rail" width="2.6" height="2.6" patternUnits="userSpaceOnUse"><path d="M0 0 L2.6 2.6 M2.6 0 L0 2.6" stroke="#111" stroke-width=".55"/></pattern><pattern id="hat2" width="3" height="2.6" patternUnits="userSpaceOnUse"><rect width="3" height="2.6" fill="#f6f6f6"/><path d="M0 .6 L3 .6" stroke="#333" stroke-width=".6"/></pattern><pattern id="sol" width="3.1" height="2.3" patternUnits="userSpaceOnUse"><rect width="3.1" height="2.3" fill="#050505"/><rect x=".5" y=".6" width="1.900" height=".9" fill="#a4a4a4"/></pattern><pattern id="brn" width="2.2" height="10" patternUnits="userSpaceOnUse"><rect width="2.2" height="10" fill="#8c4625"/><rect width=".7" height="10" fill="#7a3a1c"/></pattern></defs>
<polygon points="399.0,640.0 461.0,623.0 524.0,606.5 572.0,594.0 648.0,577.5 724.0,560.0 765.0,554.0 788.5,550.6 882.0,550.6 940.0,557.5 1001.0,565.0 1054.7,572.1 1294.5,806.1 1369.6,865.6 1369.6,1040.0 399.0,1040.0" fill="#1c2311" />
<polyline points="399.0,704.5 450.0,699.0 509.0,693.0 569.5,680.4" fill="none" stroke="#060806" stroke-width="0.8" />
<polyline points="399.0,774.7 480.0,764.0 560.0,752.0 626.0,741.5 690.0,724.0 737.0,712.0 803.4,691.7 830.0,680.0" fill="none" stroke="#060806" stroke-width="0.8" />
<polyline points="399.0,844.6 470.0,836.0 540.0,825.0 607.8,812.5" fill="none" stroke="#060806" stroke-width="0.8" />
<polyline points="399.0,914.4 444.0,908.7 483.2,902.0 517.7,895.1 527.0,893.2" fill="none" stroke="#060806" stroke-width="0.8" />
<polyline points="399.0,990.4 450.0,984.0 510.0,974.0 578.0,959.0" fill="none" stroke="#060806" stroke-width="0.8" />
<polyline points="1184.2,787.4 1220.0,792.2 1248.2,797.6 1294.0,806.0" fill="none" stroke="#060806" stroke-width="0.8" />
<polyline points="1082.7,837.6 1110.3,840.3 1154.4,864.6 1210.0,880.0 1258.5,895.0 1320.0,922.0 1369.0,948.0" fill="none" stroke="#060806" stroke-width="0.8" />
<polyline points="788.0,551.0 820.0,556.0 893.0,559.0 850.0,575.0 815.0,597.0" fill="none" stroke="#060806" stroke-width="0.8" />
<polyline points="990.0,600.0 1035.9,607.3 1091.0,614.7 1102.0,618.3" fill="none" stroke="#060806" stroke-width="0.8" />
<polyline points="1000.0,685.0 1041.4,682.3 1091.0,690.0 1151.7,691.4 1183.0,700.5" fill="none" stroke="#060806" stroke-width="0.8" />
<polyline points="1019.3,758.0 1062.0,759.0 1121.3,768.6" fill="none" stroke="#060806" stroke-width="0.8" />
<polygon points="566.7,652.6 769.5,603.7 811.3,634.8 815.0,634.8 902.3,613.3 956.7,572.9 987.0,575.4 942.8,610.8 811.3,643.7 811.3,660.0 778.4,652.5 710.0,667.4 602.3,682.3" fill="#c3c3c3" stroke="#1a1a1a" stroke-width="0.8" />
<polygon points="531.9,628.0 769.5,568.3 769.5,603.7 566.7,652.6" fill="#d3d3d3" stroke="#1a1a1a" stroke-width="0.8" /><polygon points="531.9,628.0 769.5,568.3 769.5,603.7 566.7,652.6" fill="url(#spk)" />
<polygon points="524.4,626.7 769.5,565.3 771.5,566.5 531.9,628.4" fill="#e4e4e4" stroke="#1a1a1a" stroke-width="0.8" />
<polygon points="524.4,626.7 597.5,684.1 597.5,708.7 570.2,677.2 551.0,657.4" fill="#d3d3d3" stroke="#1a1a1a" stroke-width="0.8" /><polygon points="524.4,626.7 597.5,684.1 597.5,708.7 570.2,677.2 551.0,657.4" fill="url(#spk)" />
<polygon points="524.4,626.7 531.9,626.9 602.3,682.3 597.5,684.1" fill="#e4e4e4" stroke="#1a1a1a" stroke-width="0.8" />
<polygon points="597.5,684.1 602.3,682.3 602.3,706.6 597.5,708.7" fill="#ececec" stroke="#1a1a1a" stroke-width="0.8" />
<polygon points="602.3,682.3 710.0,667.4 778.4,652.5 778.4,666.5 710.0,682.0 602.3,706.6" fill="#d3d3d3" stroke="#1a1a1a" stroke-width="0.8" /><polygon points="602.3,682.3 710.0,667.4 778.4,652.5 778.4,666.5 710.0,682.0 602.3,706.6" fill="url(#spk)" />
<polyline points="602.3,685.5 710.0,670.4 778.4,655.5" fill="none" stroke="#1a1a1a" stroke-width="0.8" />
<path d="M603 683 Q613 676 623 668 Q640 654 656 659 Q670 664 679.5 674.5 L640 686.5 L603.500 694.500 Z" fill="#2e2e2e" stroke="#0a0a0a" stroke-width=".9"/>
<path d="M612 684 L626 673 L638 676 L631 686 Z M640 668 L655 664 L662 672 L648 678 Z M646 680 L660 676 L666 678 L652 683 Z" fill="#808080" stroke="#111" stroke-width=".5"/>
<path d="M603 683 Q613 676 623 668 Q640 654 656 659 Q670 664 679.5 674.5 L640 686.5 L603.500 694.500 Z" fill="url(#hat)" opacity=".55"/>
<path d="M606 692 L625 670 M612 691 L640 661 M622 689 L654 659 M634 687 L664 664 M646 684 L672 669 M610 680 L650 684 M618 673 L668 676 M630 664 L676 673" fill="none" stroke="#0a0a0a" stroke-width=".6"/>
<polygon points="778.4,655.0 806.0,674.0 806.0,694.0 778.4,666.5" fill="#d3d3d3" stroke="#1a1a1a" stroke-width="0.8" /><polygon points="778.4,655.0 806.0,674.0 806.0,694.0 778.4,666.5" fill="url(#spk)" />
<polygon points="778.4,652.5 781.0,650.5 808.5,670.0 806.0,674.0" fill="#e4e4e4" stroke="#1a1a1a" stroke-width="0.8" />
<polygon points="802.4,665.0 811.0,664.0 853.0,691.7 836.6,694.0 806.0,694.0 806.0,674.0" fill="#8e8e8e" stroke="#1a1a1a" stroke-width="0.8" />
<polygon points="806.0,674.0 812.0,678.0 830.0,695.0 806.0,695.0" fill="url(#hat)" />
<polygon points="815.0,645.0 844.0,664.0 844.0,686.7 815.0,666.5" fill="#d3d3d3" stroke="#1a1a1a" stroke-width="0.8" /><polygon points="815.0,645.0 844.0,664.0 844.0,686.7 815.0,666.5" fill="url(#spk)" />
<polygon points="842.0,664.0 846.0,664.0 846.0,687.0 842.0,687.0" fill="#e8e8e8" stroke="#1a1a1a" stroke-width="0.8" />
<polygon points="846.0,668.0 870.0,686.0 846.0,690.0" fill="url(#hat)" />
<polygon points="769.5,565.3 815.0,599.4 811.3,634.8 769.5,603.7" fill="#d3d3d3" stroke="#1a1a1a" stroke-width="0.8" /><polygon points="769.5,565.3 815.0,599.4 811.3,634.8 769.5,603.7" fill="url(#spk)" />
<polygon points="811.3,600.0 815.0,599.4 815.0,634.8 811.3,634.8" fill="#ececec" stroke="#1a1a1a" stroke-width="0.8" />
<polygon points="815.0,613.3 902.3,591.8 953.0,551.4 956.7,552.6 956.7,572.9 902.3,613.3 815.0,634.0" fill="#d3d3d3" stroke="#1a1a1a" stroke-width="0.8" /><polygon points="815.0,613.3 902.3,591.8 953.0,551.4 956.7,552.6 956.7,572.9 902.3,613.3 815.0,634.0" fill="url(#spk)" />
<polyline points="815.0,615.5 902.3,594.0 955.0,554.0" fill="none" stroke="#1a1a1a" stroke-width="0.8" />
<polyline points="902.3,591.8 902.3,613.3" fill="none" stroke="#1a1a1a" stroke-width="0.8" />
<polygon points="811.3,643.7 946.6,612.0 1017.4,557.7 1020.0,560.0 1020.0,568.5 1001.0,586.5 953.0,637.0 946.6,640.0 887.0,654.0 844.0,664.0 815.0,645.0" fill="#d3d3d3" stroke="#1a1a1a" stroke-width="0.8" /><polygon points="811.3,643.7 946.6,612.0 1017.4,557.7 1020.0,560.0 1020.0,568.5 1001.0,586.5 953.0,637.0 946.6,640.0 887.0,654.0 844.0,664.0 815.0,645.0" fill="url(#spk)" />
<polyline points="815.0,647.0 946.6,615.0 1019.0,560.5" fill="none" stroke="#1a1a1a" stroke-width="0.8" />
<polyline points="946.6,613.0 946.6,640.0" fill="none" stroke="#1a1a1a" stroke-width="0.8" />
<rect x="1000.0" y="618.5" width="2.8" height="141.5" fill="#8a8a8a" stroke="#111" stroke-width=".6"/>
<path d="M1000.1999999999999 619.5 L1001.1 598.5 L1003.0 612.5 L1003.0 619.5 Z M1001.4 618.0 L980.1999999999999 629.5 L1000.4 621.5 Z M1001.4 618.0 L1021.9 631.5 L1002.4 622.0 Z" fill="#5a5a5a" stroke="#111" stroke-width=".6"/>
<rect x="1060.6" y="621.8" width="2.8" height="145.20000000000005" fill="#8a8a8a" stroke="#111" stroke-width=".6"/>
<path d="M1060.8 622.8 L1061.7 601.8 L1063.6 615.8 L1063.6 622.8 Z M1062 621.3 L1040.8 632.8 L1061 624.8 Z M1062 621.3 L1082.5 634.8 L1063 625.3 Z" fill="#5a5a5a" stroke="#111" stroke-width=".6"/>
<rect x="1120.6" y="625.4" width="2.8" height="145.60000000000002" fill="#8a8a8a" stroke="#111" stroke-width=".6"/>
<path d="M1120.8 626.4 L1121.7 605.4 L1123.6 619.4 L1123.6 626.4 Z M1122 624.9 L1100.8 636.4 L1121 628.4 Z M1122 624.9 L1142.5 638.4 L1123 628.9 Z" fill="#5a5a5a" stroke="#111" stroke-width=".6"/>
<polygon points="1019.3,768.0 1184.2,776.5 1045.5,806.7 1020.0,790.0" fill="#c6c7b6" stroke="#1a1a1a" stroke-width="0.8" />
<polygon points="1045.5,806.7 1184.2,776.9 1184.2,797.6 1082.7,837.6 1052.0,826.0" fill="#c6c6c6" stroke="#1a1a1a" stroke-width="0.8" />
<polyline points="1047.0,809.5 1184.2,779.8" fill="none" stroke="#1a1a1a" stroke-width="0.8" />
<polygon points="483.5,849.3 604.9,819.7 640.0,866.0 525.2,887.3" fill="#c5c6b6" stroke="#1a1a1a" stroke-width="0.8" />
<polygon points="525.2,887.3 640.0,863.0 693.4,931.5 583.4,960.6" fill="#8b8b8b" stroke="#1a1a1a" stroke-width="0.8" />
<polygon points="483.5,849.3 489.5,848.0 588.5,958.5 770.0,915.5 770.0,919.0 582.0,963.0" fill="#c5c6b6" stroke="#1a1a1a" stroke-width="0.6" />
<polyline points="486.5,849.0 585.5,961.0 770.0,917.3" fill="none" stroke="#1a1a1a" stroke-width="0.5" />
<polygon points="538.0,902.0 652.0,877.5 653.5,879.5 540.0,904.5" fill="#c5c6b6" stroke="#1a1a1a" stroke-width="0.5" />
<polygon points="408.6,897.7 444.0,899.7 443.0,913.2 407.6,911.2" fill="#050505" />
<polygon points="409.6,898.7 442.8,900.7 442.2,910.7 409.0,908.7" fill="url(#sol)" />
<polygon points="404.7,915.0 440.1,917.0 439.1,930.5 403.7,928.5" fill="#050505" />
<polygon points="405.7,916.0 438.9,918.0 438.3,928.0 405.1,926.0" fill="url(#sol)" />
<polygon points="400.8,932.2 436.2,934.2 435.2,947.7 399.8,945.7" fill="#050505" />
<polygon points="401.8,933.2 435.0,935.2 434.4,945.2 401.2,943.2" fill="url(#sol)" />
<polygon points="449.0,903.2 484.4,905.2 483.4,918.7 448.0,916.7" fill="#050505" />
<polygon points="450.0,904.2 483.2,906.2 482.6,916.2 449.4,914.2" fill="url(#sol)" />
<polygon points="445.1,920.5 480.5,922.5 479.5,936.0 444.1,934.0" fill="#050505" />
<polygon points="446.1,921.5 479.3,923.5 478.7,933.5 445.5,931.5" fill="url(#sol)" />
<polygon points="441.2,937.7 476.6,939.7 475.6,953.2 440.2,951.2" fill="#050505" />
<polygon points="442.2,938.7 475.4,940.7 474.8,950.7 441.6,948.7" fill="url(#sol)" />
<polygon points="489.4,908.7 524.8,910.7 523.8,924.2 488.4,922.2" fill="#050505" />
<polygon points="490.4,909.7 523.6,911.7 523.0,921.7 489.8,919.7" fill="url(#sol)" />
<polygon points="485.5,926.0 520.9,928.0 519.9,941.5 484.5,939.5" fill="#050505" />
<polygon points="486.5,927.0 519.7,929.0 519.1,939.0 485.9,937.0" fill="url(#sol)" />
<polygon points="481.6,943.2 517.0,945.2 516.0,958.7 480.6,956.7" fill="#050505" />
<polygon points="482.6,944.2 515.8,946.2 515.2,956.2 482.0,954.2" fill="url(#sol)" />
<polygon points="399.0,894.4 403.8,894.8 402.8,910.6 399.0,910.2" fill="#050505" />
<polygon points="399.0,913.0 400.5,913.2 399.5,926.0 399.0,926.0" fill="#050505" />
<polygon points="635.0,864.0 668.5,887.0 860.0,841.0 906.7,833.0 906.7,884.0 770.0,914.0 693.4,931.5" fill="#e3edf9" stroke="#111" stroke-width="0.8" />
<polygon points="693.4,931.5 770.0,914.0 898.0,886.0 898.0,889.0 770.0,919.5 697.0,936.0" fill="#c5c6b6" stroke="#1a1a1a" stroke-width="0.6" />
<polygon points="794.0,878.4 878.9,862.0 878.9,888.5 800.5,901.2" fill="#6f797f" stroke="#222" stroke-width="0.6" />
<polygon points="780.0,866.0 870.0,848.0 870.0,858.0 780.0,876.0" fill="#7d878d" stroke="#222" stroke-width="0.5" />
<polygon points="820.0,862.0 832.0,859.5 832.0,873.0 820.0,875.5" fill="#f4f4f4" stroke="#222" stroke-width="0.5" />
<path d="M692 900 L698 889 L702 903 L708 887 L713 905 L719 888 L724 907 L730 891 L735 908 M695 893 L736 886 M702 910 L705 896 M722 913 L724 899" fill="none" stroke="#111" stroke-width="1.6"/>
<path d="M752 880 L756 868 M760 884 L764 870 M823 852 L827 842 M836 850 L840 838 M850 848 L853 838 M860 846 L866 832" fill="none" stroke="#222" stroke-width="1.5"/>
<polyline points="696.6,930.8 696.6,880.3" fill="none" stroke="#000" stroke-width="1.5" />
<polyline points="722.0,925.1 722.0,874.1" fill="none" stroke="#000" stroke-width="1.5" />
<polyline points="747.8,919.4 747.8,868.0" fill="none" stroke="#000" stroke-width="1.5" />
<polyline points="774.7,913.4 774.7,861.5" fill="none" stroke="#000" stroke-width="1.5" />
<polyline points="800.0,907.8 800.0,855.4" fill="none" stroke="#000" stroke-width="1.5" />
<polyline points="826.6,901.9 826.6,849.0" fill="none" stroke="#000" stroke-width="1.5" />
<polyline points="853.0,896.0 853.0,842.7" fill="none" stroke="#000" stroke-width="1.5" />
<polyline points="879.7,890.1 879.7,837.6" fill="none" stroke="#000" stroke-width="1.5" />
<polyline points="903.7,884.7 903.7,833.5" fill="none" stroke="#000" stroke-width="1.5" />
<polyline points="638.0,881.5 638.0,847.5" fill="none" stroke="#000" stroke-width="1.5" />
<polyline points="651.5,893.0 651.5,859.0" fill="none" stroke="#000" stroke-width="1.5" />
<polyline points="665.7,905.1 665.7,871.1" fill="none" stroke="#000" stroke-width="1.5" />
<polyline points="681.6,918.7 681.6,884.7" fill="none" stroke="#000" stroke-width="1.5" />
<polygon points="637.0,747.7 606.6,780.6 606.6,838.7 668.5,887.0 671.0,828.0" fill="#8c8c8c" stroke="#222" stroke-width="0.8" />
<polygon points="637.0,754.0 610.5,782.5 610.5,836.5 664.5,879.0 666.5,829.0" fill="#fbfcfd" stroke="#222" stroke-width="0.6" />
<polygon points="611.0,818.0 664.0,855.0 664.0,876.0 611.0,832.0" fill="#f2f2f2" />
<polygon points="611.0,818.0 664.0,855.0 664.0,876.0 611.0,832.0" fill="url(#hat)" stroke="#222" stroke-width="0.6" />
<polygon points="640.0,775.0 660.0,800.0 660.0,850.0 640.0,834.0" fill="#dde9f6" stroke="#111" stroke-width="1.2" />
<polyline points="610.5,782.0 638.5,776.6" fill="none" stroke="#111" stroke-width="0.8" />
<polyline points="650.0,787.0 650.0,842.0" fill="none" stroke="#111" stroke-width="1.2" />
<polyline points="640.0,800.0 640.0,834.0" fill="none" stroke="#111" stroke-width="2" />
<polygon points="639.4,747.0 986.2,661.3 1017.5,745.3 671.0,828.0" fill="#b10000" stroke="#300" stroke-width="0.8" />
<polyline points="650.2,744.3 681.8,825.4" fill="none" stroke="#3a0000" stroke-width="0.7" />
<polyline points="661.1,741.6 692.7,822.8" fill="none" stroke="#3a0000" stroke-width="0.7" />
<polyline points="671.9,739.0 703.5,820.2" fill="none" stroke="#3a0000" stroke-width="0.7" />
<polyline points="682.8,736.3 714.3,817.7" fill="none" stroke="#3a0000" stroke-width="0.7" />
<polyline points="693.6,733.6 725.1,815.1" fill="none" stroke="#3a0000" stroke-width="0.7" />
<polyline points="704.4,730.9 736.0,812.5" fill="none" stroke="#3a0000" stroke-width="0.7" />
<polyline points="715.3,728.3 746.8,809.9" fill="none" stroke="#3a0000" stroke-width="0.7" />
<polyline points="726.1,725.6 757.6,807.3" fill="none" stroke="#3a0000" stroke-width="0.7" />
<polyline points="736.9,722.9 768.5,804.7" fill="none" stroke="#3a0000" stroke-width="0.7" />
<polyline points="747.8,720.2 779.3,802.2" fill="none" stroke="#3a0000" stroke-width="0.7" />
<polyline points="758.6,717.5 790.1,799.6" fill="none" stroke="#3a0000" stroke-width="0.7" />
<polyline points="769.5,714.9 800.9,797.0" fill="none" stroke="#3a0000" stroke-width="0.7" />
<polyline points="780.3,712.2 811.8,794.4" fill="none" stroke="#3a0000" stroke-width="0.7" />
<polyline points="791.1,709.5 822.6,791.8" fill="none" stroke="#3a0000" stroke-width="0.7" />
<polyline points="802.0,706.8 833.4,789.2" fill="none" stroke="#3a0000" stroke-width="0.7" />
<polyline points="812.8,704.1 844.2,786.6" fill="none" stroke="#3a0000" stroke-width="0.7" />
<polyline points="823.6,701.5 855.1,784.1" fill="none" stroke="#3a0000" stroke-width="0.7" />
<polyline points="834.5,698.8 865.9,781.5" fill="none" stroke="#3a0000" stroke-width="0.7" />
<polyline points="845.3,696.1 876.7,778.9" fill="none" stroke="#3a0000" stroke-width="0.7" />
<polyline points="856.2,693.4 887.6,776.3" fill="none" stroke="#3a0000" stroke-width="0.7" />
<polyline points="867.0,690.8 898.4,773.7" fill="none" stroke="#3a0000" stroke-width="0.7" />
<polyline points="877.8,688.1 909.2,771.1" fill="none" stroke="#3a0000" stroke-width="0.7" />
<polyline points="888.7,685.4 920.0,768.6" fill="none" stroke="#3a0000" stroke-width="0.7" />
<polyline points="899.5,682.7 930.9,766.0" fill="none" stroke="#3a0000" stroke-width="0.7" />
<polyline points="910.3,680.0 941.7,763.4" fill="none" stroke="#3a0000" stroke-width="0.7" />
<polyline points="921.2,677.4 952.5,760.8" fill="none" stroke="#3a0000" stroke-width="0.7" />
<polyline points="932.0,674.7 963.4,758.2" fill="none" stroke="#3a0000" stroke-width="0.7" />
<polyline points="942.9,672.0 974.2,755.6" fill="none" stroke="#3a0000" stroke-width="0.7" />
<polyline points="953.7,669.3 985.0,753.1" fill="none" stroke="#3a0000" stroke-width="0.7" />
<polyline points="964.5,666.7 995.8,750.5" fill="none" stroke="#3a0000" stroke-width="0.7" />
<polyline points="975.4,664.0 1006.7,747.9" fill="none" stroke="#3a0000" stroke-width="0.7" />
<polygon points="986.2,661.3 988.7,660.5 1020.5,744.5 1020.5,750.0 1017.5,745.3" fill="#9a9a9a" stroke="#444" stroke-width="0.5" />
<polygon points="875.2,736.8 895.0,733.0 902.7,753.0 883.7,758.6" fill="#111" />
<polygon points="878.5,739.5 893.5,736.5 899.3,751.3 885.3,755.5" fill="#d4dde2" />
<polyline points="890.0,737.5 895.5,752.5" fill="none" stroke="#111" stroke-width="1" />
<polygon points="671.0,828.0 1017.5,745.3 1017.5,798.4 936.0,819.3 936.0,824.0 910.0,832.0 860.0,841.0 668.5,887.0" fill="#8ca3e2" stroke="#2457d6" stroke-width="1.2" />
<polygon points="671.0,828.0 1017.5,745.3 1017.5,748.8 671.0,831.5" fill="#4f78dc" stroke="#2457d6" stroke-width="0.8" />
<polygon points="724.0,821.0 750.7,816.0 750.7,864.0 724.0,870.4" fill="#eef4fb" stroke="#1c49c4" stroke-width="1.8" />
<polygon points="724.0,864.5 750.7,858.2 750.7,864.0 724.0,870.4" fill="#111" />
<polygon points="724.0,864.5 750.7,858.2 750.7,840.0 724.0,853.1" fill="#fdfdfd" />
<polygon points="727.2,820.4 735.2,818.9 735.2,845.7 727.2,850.9" fill="#d5dbdf" />
<polyline points="735.2,818.9 735.2,845.7" fill="none" stroke="#7a858c" stroke-width="0.7" />
<polygon points="768.4,809.7 795.0,804.6 795.0,854.0 768.4,859.0" fill="#eef4fb" stroke="#1c49c4" stroke-width="1.8" />
<polygon points="768.4,853.1 795.0,848.1 795.0,854.0 768.4,859.0" fill="#111" />
<polygon points="768.4,853.1 795.0,848.1 795.0,829.3 768.4,841.7" fill="#fdfdfd" />
<polygon points="771.6,809.1 779.6,807.6 779.6,834.7 771.6,839.7" fill="#d5dbdf" />
<polyline points="779.6,807.6 779.6,834.7" fill="none" stroke="#7a858c" stroke-width="0.7" />
<polygon points="830.4,794.5 857.0,789.4 857.0,841.3 830.4,845.0" fill="#eef4fb" stroke="#1c49c4" stroke-width="1.8" />
<polygon points="830.4,838.9 857.0,835.1 857.0,841.3 830.4,845.0" fill="#111" />
<polygon points="830.4,838.9 857.0,835.1 857.0,815.3 830.4,827.3" fill="#fdfdfd" />
<polygon points="833.6,793.9 841.6,792.4 841.6,820.5 833.6,825.3" fill="#d5dbdf" />
<polyline points="841.6,792.4 841.6,820.5" fill="none" stroke="#7a858c" stroke-width="0.7" />
<polygon points="936.0,771.0 958.7,765.2 958.7,811.7 936.0,818.4" fill="#eef4fb" stroke="#1c49c4" stroke-width="1.8" />
<polygon points="936.0,812.7 958.7,806.1 958.7,811.7 936.0,818.4" fill="#111" />
<polygon points="936.0,812.7 958.7,806.1 958.7,788.5 936.0,801.8" fill="#fdfdfd" />
<polygon points="938.7,770.3 945.5,768.6 945.5,794.4 938.7,799.6" fill="#d5dbdf" />
<polyline points="945.5,768.6 945.5,794.4" fill="none" stroke="#7a858c" stroke-width="0.7" />
<polygon points="963.4,763.3 1015.6,751.0 1015.6,798.4 963.4,810.8" fill="#eef4fb" stroke="#1c49c4" stroke-width="1.8" />
<polygon points="963.4,805.1 1015.6,792.7 1015.6,798.4 963.4,810.8" fill="#111" />
<polygon points="963.4,805.1 1015.6,792.7 1015.6,774.7 963.4,794.2" fill="#fdfdfd" />
<polygon points="969.7,761.8 985.3,758.1 985.3,784.2 969.7,791.3" fill="#d5dbdf" />
<polyline points="985.3,758.1 985.3,784.2" fill="none" stroke="#7a858c" stroke-width="0.7" />
<polygon points="1000.0,755.0 1015.6,751.0 1015.6,796.0 1000.0,789.0" fill="#3d7a82" stroke="#123" stroke-width="0.5" />
<polyline points="990.0,757.0 990.0,804.0" fill="none" stroke="#111" stroke-width="1.6" />
<polygon points="680.0,846.0 712.0,838.0 712.0,872.0 680.0,880.0" fill="#7f97da" stroke="#5f7fd6" stroke-width="0.8" />
<polygon points="800.0,806.0 826.0,800.0 826.0,846.0 800.0,852.0" fill="#7f97da" stroke="#5f7fd6" stroke-width="0.8" />
<polygon points="864.0,790.0 906.0,780.0 906.0,830.0 864.0,838.0" fill="#7f97da" stroke="#5f7fd6" stroke-width="0.8" />
<polyline points="668.5,887.0 860.0,841.0 910.0,832.0" fill="none" stroke="#2457d6" stroke-width="2.2" />
<polyline points="700.0,868.0 840.0,832.0 930.0,805.0" fill="none" stroke="#5b84e8" stroke-width="1" />
<polygon points="906.7,832.9 936.0,819.5 1017.5,799.0 1043.0,828.0 1119.0,884.8 1134.4,899.0 1031.0,923.6" fill="#a8a8a8" stroke="#1a1a1a" stroke-width="0.7" />
<polygon points="936.0,819.5 1017.5,799.0 1043.0,828.0 962.0,848.0" fill="#c9c9c9" stroke="#1a1a1a" stroke-width="0.6" />
<polyline points="946.2,828.8 1026.4,808.8" fill="none" stroke="#222" stroke-width="0.6" />
<polyline points="948.5,831.5 1028.8,811.5" fill="none" stroke="#222" stroke-width="0.6" />
<polyline points="950.8,834.2 1031.1,814.2" fill="none" stroke="#222" stroke-width="0.6" />
<polyline points="953.0,837.0 1033.5,817.0" fill="none" stroke="#222" stroke-width="0.6" />
<polyline points="955.2,839.8 1035.9,819.8" fill="none" stroke="#222" stroke-width="0.6" />
<polyline points="957.5,842.5 1038.2,822.5" fill="none" stroke="#222" stroke-width="0.6" />
<polyline points="959.8,845.2 1040.6,825.2" fill="none" stroke="#222" stroke-width="0.6" />
<polygon points="1013.2,895.1 1119.4,873.4 1133.9,897.5 1031.0,918.0" fill="#8f8f8f" />
<polygon points="1013.2,895.1 1119.4,873.4 1133.9,897.5 1031.0,918.0" fill="url(#rail)" stroke="#111" stroke-width="0.6" />
<polygon points="1024.0,912.0 1128.0,888.0 1134.4,899.0 1031.0,923.6" fill="#a8a8a8" />
<polygon points="910.5,806.0 1012.9,898.0 1012.9,915.0 906.7,832.9" fill="url(#rail)" stroke="#000" stroke-width="0.9" />
<polyline points="910.5,806.0 910.5,835.8" fill="none" stroke="#000" stroke-width="1.2" />
<polyline points="924.8,818.9 924.8,846.9" fill="none" stroke="#000" stroke-width="1.2" />
<polyline points="939.2,831.8 939.2,858.0" fill="none" stroke="#000" stroke-width="1.2" />
<polyline points="953.5,844.6 953.5,869.1" fill="none" stroke="#000" stroke-width="1.2" />
<polyline points="967.8,857.5 967.8,880.2" fill="none" stroke="#000" stroke-width="1.2" />
<polyline points="982.2,870.4 982.2,891.2" fill="none" stroke="#000" stroke-width="1.2" />
<polyline points="996.5,883.3 996.5,902.3" fill="none" stroke="#000" stroke-width="1.2" />
<polyline points="1012.9,898.0 1012.9,915.0" fill="none" stroke="#000" stroke-width="1.2" />
<polygon points="1043.0,812.0 1119.0,867.0 1119.0,886.0 1043.0,828.0" fill="url(#rail)" stroke="#000" stroke-width="0.9" />
<polyline points="1043.0,812.0 1043.0,828.0" fill="none" stroke="#000" stroke-width="1.2" />
<polyline points="1058.2,823.0 1058.2,839.6" fill="none" stroke="#000" stroke-width="1.2" />
<polyline points="1073.4,834.0 1073.4,851.2" fill="none" stroke="#000" stroke-width="1.2" />
<polyline points="1088.6,845.0 1088.6,862.8" fill="none" stroke="#000" stroke-width="1.2" />
<polyline points="1103.8,856.0 1103.8,874.4" fill="none" stroke="#000" stroke-width="1.2" />
<polyline points="1119.0,867.0 1119.0,886.0" fill="none" stroke="#000" stroke-width="1.2" />
<polyline points="1017.5,780.0 1024.0,790.0 1034.0,800.0 1040.0,812.0 1045.0,825.0" fill="none" stroke="#0c0c0c" stroke-width="4" />
<polygon points="1066.0,839.5 1071.0,839.5 1071.0,904.0 1066.0,904.0" fill="#8a8a8a" stroke="#333" stroke-width="0.6" />
<path d="M997 858 L1000 858 L1001 865 L1003 868 L1003 880 L1000 890 L996 890 L994 880 L994 868 L996 865 Z" fill="#8d8d8d" stroke="#555" stroke-width=".5"/>
<polygon points="906.7,832.9 1056.0,948.0 1056.0,1017.5 927.0,918.9 909.2,887.3 906.7,880.0" fill="url(#brn)" stroke="#3a1a08" stroke-width="0.8" />
<polygon points="1056.0,948.0 1059.7,949.2 1059.7,1018.8 1056.0,1017.5" fill="#a85a30" stroke="#3a1a08" stroke-width="0.6" />
<polygon points="935.8,864.5 994.0,908.8 994.0,959.3 935.8,913.8" fill="#b7c3c3" stroke="#050505" stroke-width="2" />
<polyline points="950.3,875.6 950.3,925.2" fill="none" stroke="#050505" stroke-width="1.8" />
<polyline points="964.9,886.6 964.9,936.5" fill="none" stroke="#050505" stroke-width="1.8" />
<polyline points="979.5,897.7 979.5,947.9" fill="none" stroke="#050505" stroke-width="1.8" />
<polygon points="969.0,893.0 989.0,908.0 989.0,930.0 969.0,915.0" fill="#8c4a2c" opacity=".55"/>
<polygon points="971.0,951.0 976.0,955.0 976.0,966.0 971.0,966.0" fill="#fdfdfd" stroke="#444" stroke-width="0.4" />
<polygon points="1000.0,974.0 1005.0,978.0 1005.0,989.0 1000.0,989.0" fill="#fdfdfd" stroke="#444" stroke-width="0.4" />
<polygon points="1029.0,997.0 1034.0,1001.0 1034.0,1012.0 1029.0,1012.0" fill="#fdfdfd" stroke="#444" stroke-width="0.4" />
<polygon points="1134.4,899.0 1169.3,921.0 1169.3,992.0 1158.0,985.0 1134.4,957.0" fill="url(#brn)" stroke="#3a1a08" stroke-width="0.8" />
<polygon points="1031.0,923.6 1134.4,899.0 1135.7,905.5 1036.2,930.0" fill="url(#brn)" stroke="#3a1a08" stroke-width="0.6" />
<polygon points="1036.2,930.0 1135.7,905.5 1133.0,957.0 1060.0,972.7 1060.0,950.0" fill="#b2bebe" stroke="#111" stroke-width="0.8" />
<polygon points="1108.0,917.0 1133.0,910.6 1133.0,957.0 1108.0,962.5" fill="#dfe9f2" stroke="#111" stroke-width="0.6" />
<polygon points="1060.0,972.7 1134.4,957.2 1162.9,976.6 1060.0,998.0" fill="#fdfdfd" stroke="#222" stroke-width="0.6" />
<polygon points="1060.0,983.0 1157.7,962.0 1157.7,983.0 1060.0,1006.3" fill="url(#hat2)" stroke="#111" stroke-width="0.8" />
<polyline points="1081.0,926.0 1081.0,968.0" fill="none" stroke="#050505" stroke-width="1.8" />
<polyline points="1106.0,926.0 1106.0,968.0" fill="none" stroke="#050505" stroke-width="1.8" />
<ellipse cx="1073" cy="945" rx="10" ry="14" fill="#8a9aa2" opacity=".8"/>
<path d="M1125 955 L1128 955 L1129 962 L1131 965 L1130 985 L1124 985 L1123 965 Z" fill="#8d8d8d" stroke="#555" stroke-width=".5"/>
<polyline points="954.9,696.9 1011.8,740.6" fill="none" stroke="#1f9be0" stroke-width="1.1" stroke-dasharray="3 3"/>
<polyline points="971.0,821.0 1020.0,862.0 1085.0,912.0 1166.0,975.0" fill="none" stroke="#1f9be0" stroke-width="1.1" stroke-dasharray="3 3"/>
<polyline points="1000.0,846.0 1060.0,893.0 1100.0,930.0" fill="none" stroke="#1f9be0" stroke-width="1.1" stroke-dasharray="3 3"/>
<polyline points="1026.0,932.0 1135.0,908.0" fill="none" stroke="#1f9be0" stroke-width="1.1" stroke-dasharray="3 3"/>
<polyline points="984.0,721.0 1024.0,726.0" fill="none" stroke="#666" stroke-width="1.2" />
<g transform="translate(1031.7,726.5)"><path d="M-3.2 -1 L-3.2 -4 A3.2 3.4 0 0 1 3.2 -4 L3.2 -1" fill="none" stroke="#1f5fd0" stroke-width="1.6"/><rect x="-5.5" y="-1.5" width="11" height="8.5" rx="1" fill="#c8f0f6" stroke="#1f5fd0" stroke-width="1.1"/><path d="M-4 1 L4 1 M-4 3 L4 3 M-4 5 L4 5" stroke="#8fd8e6" stroke-width=".8"/></g>
<g transform="translate(798.5,839.0)"><path d="M-3.2 -1 L-3.2 -4 A3.2 3.4 0 0 1 3.2 -4 L3.2 -1" fill="none" stroke="#1f5fd0" stroke-width="1.6"/><rect x="-5.5" y="-1.5" width="11" height="8.5" rx="1" fill="#c8f0f6" stroke="#1f5fd0" stroke-width="1.1"/><path d="M-4 1 L4 1 M-4 3 L4 3 M-4 5 L4 5" stroke="#8fd8e6" stroke-width=".8"/></g>
<g transform="translate(859.0,850.0)"><path d="M-3.2 -1 L-3.2 -4 A3.2 3.4 0 0 1 3.2 -4 L3.2 -1" fill="none" stroke="#1f5fd0" stroke-width="1.6"/><rect x="-5.5" y="-1.5" width="11" height="8.5" rx="1" fill="#c8f0f6" stroke="#1f5fd0" stroke-width="1.1"/><path d="M-4 1 L4 1 M-4 3 L4 3 M-4 5 L4 5" stroke="#8fd8e6" stroke-width=".8"/></g>
<g transform="translate(903.0,886.0)"><path d="M-3.2 -1 L-3.2 -4 A3.2 3.4 0 0 1 3.2 -4 L3.2 -1" fill="none" stroke="#1f5fd0" stroke-width="1.6"/><rect x="-5.5" y="-1.5" width="11" height="8.5" rx="1" fill="#c8f0f6" stroke="#1f5fd0" stroke-width="1.1"/><path d="M-4 1 L4 1 M-4 3 L4 3 M-4 5 L4 5" stroke="#8fd8e6" stroke-width=".8"/></g>
<g transform="translate(1018.0,875.5)"><path d="M-3.2 -1 L-3.2 -4 A3.2 3.4 0 0 1 3.2 -4 L3.2 -1" fill="none" stroke="#1f5fd0" stroke-width="1.6"/><rect x="-5.5" y="-1.5" width="11" height="8.5" rx="1" fill="#c8f0f6" stroke="#1f5fd0" stroke-width="1.1"/><path d="M-4 1 L4 1 M-4 3 L4 3 M-4 5 L4 5" stroke="#8fd8e6" stroke-width=".8"/></g>
<g transform="translate(1049.0,896.0)"><path d="M-3.2 -1 L-3.2 -4 A3.2 3.4 0 0 1 3.2 -4 L3.2 -1" fill="none" stroke="#1f5fd0" stroke-width="1.6"/><rect x="-5.5" y="-1.5" width="11" height="8.5" rx="1" fill="#c8f0f6" stroke="#1f5fd0" stroke-width="1.1"/><path d="M-4 1 L4 1 M-4 3 L4 3 M-4 5 L4 5" stroke="#8fd8e6" stroke-width=".8"/></g>
<g transform="translate(1113.5,905.0)"><path d="M-3.2 -1 L-3.2 -4 A3.2 3.4 0 0 1 3.2 -4 L3.2 -1" fill="none" stroke="#1f5fd0" stroke-width="1.6"/><rect x="-5.5" y="-1.5" width="11" height="8.5" rx="1" fill="#c8f0f6" stroke="#1f5fd0" stroke-width="1.1"/><path d="M-4 1 L4 1 M-4 3 L4 3 M-4 5 L4 5" stroke="#8fd8e6" stroke-width=".8"/></g>
<g transform="translate(1090.5,966.0)"><path d="M-3.2 -1 L-3.2 -4 A3.2 3.4 0 0 1 3.2 -4 L3.2 -1" fill="none" stroke="#1f5fd0" stroke-width="1.6"/><rect x="-5.5" y="-1.5" width="11" height="8.5" rx="1" fill="#c8f0f6" stroke="#1f5fd0" stroke-width="1.1"/><path d="M-4 1 L4 1 M-4 3 L4 3 M-4 5 L4 5" stroke="#8fd8e6" stroke-width=".8"/></g>
<polyline points="600.0,883.0 640.0,872.0 760.0,845.0" fill="none" stroke="#6b8ee8" stroke-width="0.9" />
<polyline points="612.0,895.0 650.0,886.0 770.0,858.0" fill="none" stroke="#6b8ee8" stroke-width="0.9" />
<polyline points="592.0,881.0 616.0,900.0" fill="none" stroke="#3b6fe0" stroke-width="1" />
<text x="0" y="0" transform="translate(598,874) rotate(38)" font-family="Liberation Sans,sans-serif" font-size="13.5" fill="#2b66dd">16760</text>
<circle cx="622.5" cy="876" r="2.8" fill="#5b8fe0" stroke="#2457d6" stroke-width=".8"/>
<circle cx="640" cy="889" r="2.8" fill="#5b8fe0" stroke="#2457d6" stroke-width=".8"/>
<circle cx="668.5" cy="884" r="3.6" fill="#5b8fe0" stroke="#2457d6" stroke-width=".8"/>
<circle cx="1007" cy="798" r="3.4" fill="#5b8fe0" stroke="#2457d6" stroke-width=".8"/>
<path d="M843 773 L846.5 784 L839.5 784 Z" fill="#3a3aa8"/>
<g><ellipse cx="1307.5" cy="635.5" rx="46.5" ry="22.5" fill="none" stroke="#e2e2e2" stroke-width="1.2"/><ellipse cx="1307.5" cy="635" rx="38" ry="17.5" fill="none" stroke="#e6e6e6" stroke-width="1.2"/><ellipse cx="1310" cy="634" rx="24" ry="8" fill="#ededed"/><path d="M1284 594.9 L1311.6 588.8 L1331 597.6 L1300.6 606.5 Z" fill="#f0f0f0" stroke="#c4c4c4" stroke-width="1"/><path d="M1284 594.9 L1300.6 606.5 L1300.6 637.6 L1285.400 625.2 Z" fill="#e8e8e8" stroke="#c4c4c4" stroke-width="1"/><path d="M1300.6 606.5 L1331 597.6 L1329.6 628 L1300.6 637.6 Z" fill="#ececec" stroke="#c4c4c4" stroke-width="1"/><text x="1315" y="626" font-family="Liberation Sans,Noto Sans CJK TC,sans-serif" font-size="14" fill="#bdbdbd" text-anchor="middle" transform="skewY(-16) translate(0,376)">前</text><text x="1269" y="618" font-family="Liberation Sans,Noto Sans CJK TC,sans-serif" font-size="7" fill="#c9c9c9" text-anchor="middle">西</text><text x="1346" y="625" font-family="Liberation Sans,Noto Sans CJK TC,sans-serif" font-size="7" fill="#c9c9c9" text-anchor="middle">東</text><text x="1300" y="656" font-family="Liberation Sans,Noto Sans CJK TC,sans-serif" font-size="7" fill="#c9c9c9" text-anchor="middle">南</text></g>
<rect x="1334.5" y="668.5" width="33.5" height="117" rx="3" fill="#f3f3f3" stroke="#b9b9b9" stroke-width="1.4"/><circle cx="1360.5" cy="675" r="3" fill="#fff" stroke="#9a9a9a" stroke-width="1"/><path d="M1359 673.5 l3 3 m0 -3 l-3 3" stroke="#9a9a9a" stroke-width=".8"/><circle cx="1350" cy="700" r="10.5" fill="#f6f6f6" stroke="#9a9a9a" stroke-width="1.2"/><circle cx="1350" cy="700" r="6.3" fill="#fff" stroke="#9a9a9a" stroke-width="1.2"/><path d="M1347 720 l6 0 l-3 3 Z" fill="#8a8a8a"/><path d="M1338 726.5 L1364 726.5" stroke="#c8c8c8" stroke-width="1"/><rect x="1343" y="735" width="10" height="10" fill="#b9d7a8" stroke="#8fb87c" stroke-width=".8"/><circle cx="1353.500" cy="745.5" r="3.4" fill="#f3f3f3" stroke="#8a8a8a" stroke-width="1.1"/><path d="M1356 748 L1359 751" stroke="#8a8a8a" stroke-width="1.4"/><path d="M1347 761 l6 0 l-3 3 Z" fill="#8a8a8a"/><circle cx="1360.5" cy="778" r="3" fill="#fff" stroke="#9a9a9a" stroke-width="1"/><path d="M1358.600 778 l3.800 0" stroke="#9a9a9a" stroke-width=".9"/>
</svg>
<div class="pb" style="left:85px;top:108px;width:1255px;height:77px"></div>
<div class="pb" style="left:93px;top:353px;width:581.5px;height:27px"></div>
<div class="pb" style="left:1020px;top:353px;width:243px;height:27px"></div>
<div class="pb" style="left:96px;top:402px;width:1284px;height:80px"></div>
<div class="pb" style="left:93px;top:496px;width:1286px;height:36px"></div>
<div class="pb" style="left:93px;top:615px;width:304px;height:179px"></div>
<div class="pb" style="left:92px;top:1057px;width:309px;height:29px"></div>
<div class="pb" style="left:400px;top:1033px;width:442px;height:28px"></div>
<div class="ln" style="left:151px;top:22px;width:2px;height:68px"></div>
<div class="dot" style="left:148px;top:86px"></div>
<div class="num" style="left:142px;top:12px">13</div>
<div class="ln" style="left:818px;top:22px;width:2px;height:66px"></div>
<div class="dot" style="left:815px;top:84px"></div>
<div class="num" style="left:809px;top:12px">14</div>
<div class="ln" style="left:1340px;top:145px;width:88px;height:2px"></div>
<div class="dot" style="left:1336px;top:142px"></div>
<div class="num" style="left:1418px;top:136px">15</div>
<div class="num" style="left:1297px;top:187px">16</div>
<div class="ln" style="left:102px;top:312px;width:2px;height:77px"></div>
<div class="dot" style="left:99px;top:385px"></div>
<div class="num" style="left:93px;top:302px">2</div>
<div class="ln" style="left:128px;top:312px;width:2px;height:48px"></div>
<div class="dot" style="left:125px;top:356px"></div>
<div class="num" style="left:119px;top:302px">1</div>
<div class="ln" style="left:346px;top:312px;width:2px;height:41px"></div>
<div class="dot" style="left:343px;top:349px"></div>
<div class="num" style="left:337px;top:302px">3</div>
<div class="ln" style="left:1141px;top:312px;width:2px;height:41px"></div>
<div class="dot" style="left:1138px;top:349px"></div>
<div class="num" style="left:1132px;top:302px">4</div>
<div class="ln" style="left:24px;top:438px;width:72px;height:2px"></div>
<div class="dot" style="left:92px;top:435px"></div>
<div class="num" style="left:14px;top:429px">12</div>
<div class="ln" style="left:24px;top:512px;width:67px;height:2px"></div>
<div class="dot" style="left:87px;top:509px"></div>
<div class="num" style="left:14px;top:503px">5</div>
<div class="num" style="left:346px;top:573px">6</div>
<div class="ln" style="left:24px;top:710px;width:68px;height:2px"></div>
<div class="dot" style="left:88px;top:707px"></div>
<div class="num" style="left:14px;top:701px">7</div>
<div class="num" style="left:212px;top:921px">8</div>
<div class="ln" style="left:29px;top:1072px;width:63px;height:2px"></div>
<div class="dot" style="left:88px;top:1069px"></div>
<div class="num" style="left:19px;top:1063px">9</div>
<div class="ln" style="left:619px;top:1062px;width:2px;height:69px"></div>
<div class="dot" style="left:616px;top:1058px"></div>
<div class="num" style="left:610px;top:1121px">10</div>
<div class="num" style="left:562px;top:565.5px">11</div>
</body></html>
